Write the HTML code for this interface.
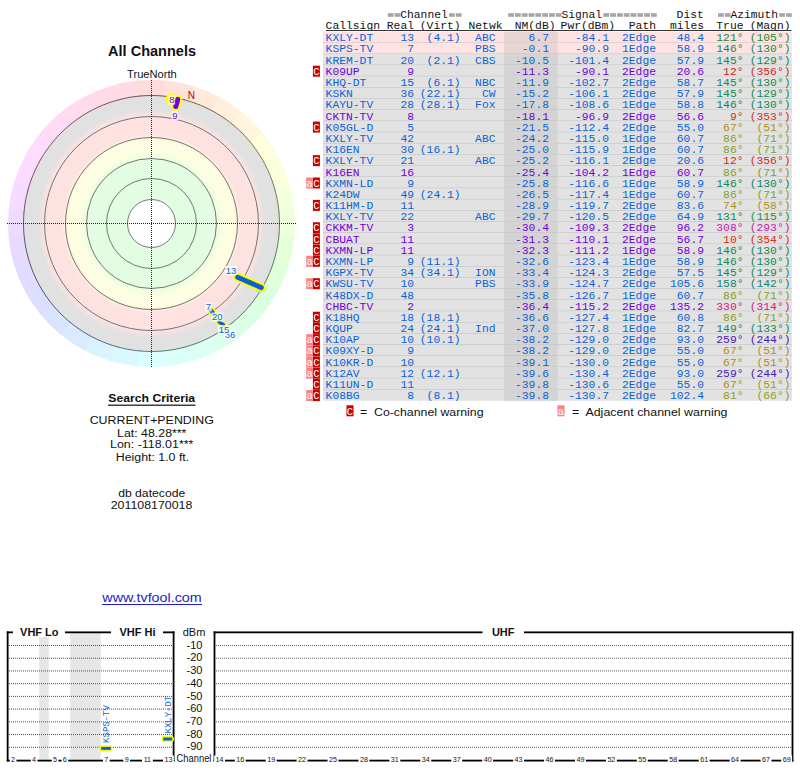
<!DOCTYPE html>
<html><head><meta charset="utf-8"><style>
html,body{margin:0;padding:0;background:#fff;width:800px;height:768px;overflow:hidden}
svg{display:block}
</style></head><body>
<svg width="800" height="768" viewBox="0 0 800 768">
<rect width="800" height="768" fill="#fff"/>
<path d="M136.69,80.77 A143.5,143.5 0 0 1 166.31,80.77 L164.61,97.18 A127,127 0 0 0 138.39,97.18 Z" fill="#ffdbdb"/>
<path d="M164.82,80.62 A143.5,143.5 0 0 1 193.87,86.40 L189.00,102.16 A127,127 0 0 0 163.29,97.05 Z" fill="#ffe2db"/>
<path d="M192.44,85.96 A143.5,143.5 0 0 1 219.81,97.30 L211.95,111.81 A127,127 0 0 0 187.73,101.78 Z" fill="#ffe9db"/>
<path d="M218.48,96.59 A143.5,143.5 0 0 1 243.11,113.05 L232.58,125.75 A127,127 0 0 0 210.78,111.18 Z" fill="#ffefdb"/>
<path d="M241.95,112.10 A143.5,143.5 0 0 1 262.90,133.05 L250.09,143.45 A127,127 0 0 0 231.55,124.91 Z" fill="#fff6db"/>
<path d="M261.95,131.89 A143.5,143.5 0 0 1 278.41,156.52 L263.82,164.22 A127,127 0 0 0 249.25,142.42 Z" fill="#fffddb"/>
<path d="M277.70,155.19 A143.5,143.5 0 0 1 289.04,182.56 L273.22,187.27 A127,127 0 0 0 263.19,163.05 Z" fill="#fbffdb"/>
<path d="M288.60,181.13 A143.5,143.5 0 0 1 294.38,210.18 L277.95,211.71 A127,127 0 0 0 272.84,186.00 Z" fill="#f4ffdb"/>
<path d="M294.23,208.69 A143.5,143.5 0 0 1 294.23,238.31 L277.82,236.61 A127,127 0 0 0 277.82,210.39 Z" fill="#edffdb"/>
<path d="M294.38,236.82 A143.5,143.5 0 0 1 288.60,265.87 L272.84,261.00 A127,127 0 0 0 277.95,235.29 Z" fill="#e6ffdb"/>
<path d="M289.04,264.44 A143.5,143.5 0 0 1 277.70,291.81 L263.19,283.95 A127,127 0 0 0 273.22,259.73 Z" fill="#e0ffdb"/>
<path d="M278.41,290.48 A143.5,143.5 0 0 1 261.95,315.11 L249.25,304.58 A127,127 0 0 0 263.82,282.78 Z" fill="#dbffde"/>
<path d="M262.90,313.95 A143.5,143.5 0 0 1 241.95,334.90 L231.55,322.09 A127,127 0 0 0 250.09,303.55 Z" fill="#dbffe4"/>
<path d="M243.11,333.95 A143.5,143.5 0 0 1 218.48,350.41 L210.78,335.82 A127,127 0 0 0 232.58,321.25 Z" fill="#dbffeb"/>
<path d="M219.81,349.70 A143.5,143.5 0 0 1 192.44,361.04 L187.73,345.22 A127,127 0 0 0 211.95,335.19 Z" fill="#dbfff2"/>
<path d="M193.87,360.60 A143.5,143.5 0 0 1 164.82,366.38 L163.29,349.95 A127,127 0 0 0 189.00,344.84 Z" fill="#dbfff8"/>
<path d="M166.31,366.23 A143.5,143.5 0 0 1 136.69,366.23 L138.39,349.82 A127,127 0 0 0 164.61,349.82 Z" fill="#dbffff"/>
<path d="M138.18,366.38 A143.5,143.5 0 0 1 109.13,360.60 L114.00,344.84 A127,127 0 0 0 139.71,349.95 Z" fill="#dbf8ff"/>
<path d="M110.56,361.04 A143.5,143.5 0 0 1 83.19,349.70 L91.05,335.19 A127,127 0 0 0 115.27,345.22 Z" fill="#dbf2ff"/>
<path d="M84.52,350.41 A143.5,143.5 0 0 1 59.89,333.95 L70.42,321.25 A127,127 0 0 0 92.22,335.82 Z" fill="#dbebff"/>
<path d="M61.05,334.90 A143.5,143.5 0 0 1 40.10,313.95 L52.91,303.55 A127,127 0 0 0 71.45,322.09 Z" fill="#dbe4ff"/>
<path d="M41.05,315.11 A143.5,143.5 0 0 1 24.59,290.48 L39.18,282.78 A127,127 0 0 0 53.75,304.58 Z" fill="#dbdeff"/>
<path d="M25.30,291.81 A143.5,143.5 0 0 1 13.96,264.44 L29.78,259.73 A127,127 0 0 0 39.81,283.95 Z" fill="#e0dbff"/>
<path d="M14.40,265.87 A143.5,143.5 0 0 1 8.62,236.82 L25.05,235.29 A127,127 0 0 0 30.16,261.00 Z" fill="#e6dbff"/>
<path d="M8.77,238.31 A143.5,143.5 0 0 1 8.77,208.69 L25.18,210.39 A127,127 0 0 0 25.18,236.61 Z" fill="#eddbff"/>
<path d="M8.62,210.18 A143.5,143.5 0 0 1 14.40,181.13 L30.16,186.00 A127,127 0 0 0 25.05,211.71 Z" fill="#f4dbff"/>
<path d="M13.96,182.56 A143.5,143.5 0 0 1 25.30,155.19 L39.81,163.05 A127,127 0 0 0 29.78,187.27 Z" fill="#fbdbff"/>
<path d="M24.59,156.52 A143.5,143.5 0 0 1 41.05,131.89 L53.75,142.42 A127,127 0 0 0 39.18,164.22 Z" fill="#ffdbfd"/>
<path d="M40.10,133.05 A143.5,143.5 0 0 1 61.05,112.10 L71.45,124.91 A127,127 0 0 0 52.91,143.45 Z" fill="#ffdbf6"/>
<path d="M59.89,113.05 A143.5,143.5 0 0 1 84.52,96.59 L92.22,111.18 A127,127 0 0 0 70.42,125.75 Z" fill="#ffdbef"/>
<path d="M83.19,97.30 A143.5,143.5 0 0 1 110.56,85.96 L115.27,101.78 A127,127 0 0 0 91.05,111.81 Z" fill="#ffdbe9"/>
<path d="M109.13,86.40 A143.5,143.5 0 0 1 138.18,80.62 L139.71,97.05 A127,127 0 0 0 114.00,102.16 Z" fill="#ffdbe2"/>
<defs><radialGradient id="bands" cx="151.5" cy="223.5" r="128" gradientUnits="userSpaceOnUse">
<stop offset="0.0000" stop-color="#ffffff"/>
<stop offset="0.1875" stop-color="#ffffff"/>
<stop offset="0.1876" stop-color="#e2fde2"/>
<stop offset="0.4961" stop-color="#e2fde2"/>
<stop offset="0.5586" stop-color="#fdfde2"/>
<stop offset="0.6523" stop-color="#fdfde2"/>
<stop offset="0.6992" stop-color="#fee2e2"/>
<stop offset="0.8359" stop-color="#fee2e2"/>
<stop offset="0.8906" stop-color="#e1e1e1"/>
<stop offset="1.0000" stop-color="#e1e1e1"/>
</radialGradient></defs>
<circle cx="151.5" cy="223.5" r="128" fill="url(#bands)"/>
<circle cx="151.5" cy="223.5" r="24" fill="none" stroke="#555" stroke-width="0.8"/>
<circle cx="151.5" cy="223.5" r="45" fill="none" stroke="#555" stroke-width="0.8"/>
<circle cx="151.5" cy="223.5" r="65" fill="none" stroke="#555" stroke-width="0.8"/>
<circle cx="151.5" cy="223.5" r="86" fill="none" stroke="#555" stroke-width="0.8"/>
<circle cx="151.5" cy="223.5" r="107" fill="none" stroke="#555" stroke-width="0.8"/>
<path d="M151.50,95.50 A128,128 0 0 1 163.10,96.03" fill="none" stroke="#73413f" stroke-width="0.9"/>
<path d="M162.66,95.99 A128,128 0 0 1 174.17,97.52" fill="none" stroke="#73463f" stroke-width="0.9"/>
<path d="M173.73,97.44 A128,128 0 0 1 185.06,99.98" fill="none" stroke="#734a3f" stroke-width="0.9"/>
<path d="M184.63,99.86 A128,128 0 0 1 195.70,103.37" fill="none" stroke="#734e3f" stroke-width="0.9"/>
<path d="M195.28,103.22 A128,128 0 0 1 206.00,107.68" fill="none" stroke="#73523f" stroke-width="0.9"/>
<path d="M205.60,107.49 A128,128 0 0 1 215.89,112.87" fill="none" stroke="#73573f" stroke-width="0.9"/>
<path d="M215.50,112.65 A128,128 0 0 1 225.28,118.91" fill="none" stroke="#735b3f" stroke-width="0.9"/>
<path d="M224.92,118.65 A128,128 0 0 1 234.12,125.73" fill="none" stroke="#735f3f" stroke-width="0.9"/>
<path d="M233.78,125.45 A128,128 0 0 1 242.33,133.31" fill="none" stroke="#73643f" stroke-width="0.9"/>
<path d="M242.01,132.99 A128,128 0 0 1 249.84,141.57" fill="none" stroke="#73683f" stroke-width="0.9"/>
<path d="M249.55,141.22 A128,128 0 0 1 256.61,150.45" fill="none" stroke="#736c3f" stroke-width="0.9"/>
<path d="M256.35,150.08 A128,128 0 0 1 262.57,159.89" fill="none" stroke="#73713f" stroke-width="0.9"/>
<path d="M262.35,159.50 A128,128 0 0 1 267.70,169.81" fill="none" stroke="#71733f" stroke-width="0.9"/>
<path d="M267.51,169.40 A128,128 0 0 1 271.93,180.14" fill="none" stroke="#6c733f" stroke-width="0.9"/>
<path d="M271.78,179.72 A128,128 0 0 1 275.25,190.80" fill="none" stroke="#68733f" stroke-width="0.9"/>
<path d="M275.14,190.37 A128,128 0 0 1 277.63,201.71" fill="none" stroke="#64733f" stroke-width="0.9"/>
<path d="M277.56,201.27 A128,128 0 0 1 279.05,212.79" fill="none" stroke="#5f733f" stroke-width="0.9"/>
<path d="M279.01,212.34 A128,128 0 0 1 279.50,223.95" fill="none" stroke="#5b733f" stroke-width="0.9"/>
<path d="M279.50,223.50 A128,128 0 0 1 278.97,235.10" fill="none" stroke="#57733f" stroke-width="0.9"/>
<path d="M279.01,234.66 A128,128 0 0 1 277.48,246.17" fill="none" stroke="#52733f" stroke-width="0.9"/>
<path d="M277.56,245.73 A128,128 0 0 1 275.02,257.06" fill="none" stroke="#4e733f" stroke-width="0.9"/>
<path d="M275.14,256.63 A128,128 0 0 1 271.63,267.70" fill="none" stroke="#4a733f" stroke-width="0.9"/>
<path d="M271.78,267.28 A128,128 0 0 1 267.32,278.00" fill="none" stroke="#46733f" stroke-width="0.9"/>
<path d="M267.51,277.60 A128,128 0 0 1 262.13,287.89" fill="none" stroke="#41733f" stroke-width="0.9"/>
<path d="M262.35,287.50 A128,128 0 0 1 256.09,297.28" fill="none" stroke="#3f7341" stroke-width="0.9"/>
<path d="M256.35,296.92 A128,128 0 0 1 249.27,306.12" fill="none" stroke="#3f7346" stroke-width="0.9"/>
<path d="M249.55,305.78 A128,128 0 0 1 241.69,314.33" fill="none" stroke="#3f734a" stroke-width="0.9"/>
<path d="M242.01,314.01 A128,128 0 0 1 233.43,321.84" fill="none" stroke="#3f734e" stroke-width="0.9"/>
<path d="M233.78,321.55 A128,128 0 0 1 224.55,328.61" fill="none" stroke="#3f7352" stroke-width="0.9"/>
<path d="M224.92,328.35 A128,128 0 0 1 215.11,334.57" fill="none" stroke="#3f7357" stroke-width="0.9"/>
<path d="M215.50,334.35 A128,128 0 0 1 205.19,339.70" fill="none" stroke="#3f735b" stroke-width="0.9"/>
<path d="M205.60,339.51 A128,128 0 0 1 194.86,343.93" fill="none" stroke="#3f735f" stroke-width="0.9"/>
<path d="M195.28,343.78 A128,128 0 0 1 184.20,347.25" fill="none" stroke="#3f7364" stroke-width="0.9"/>
<path d="M184.63,347.14 A128,128 0 0 1 173.29,349.63" fill="none" stroke="#3f7368" stroke-width="0.9"/>
<path d="M173.73,349.56 A128,128 0 0 1 162.21,351.05" fill="none" stroke="#3f736c" stroke-width="0.9"/>
<path d="M162.66,351.01 A128,128 0 0 1 151.05,351.50" fill="none" stroke="#3f7371" stroke-width="0.9"/>
<path d="M151.50,351.50 A128,128 0 0 1 139.90,350.97" fill="none" stroke="#3f7173" stroke-width="0.9"/>
<path d="M140.34,351.01 A128,128 0 0 1 128.83,349.48" fill="none" stroke="#3f6c73" stroke-width="0.9"/>
<path d="M129.27,349.56 A128,128 0 0 1 117.94,347.02" fill="none" stroke="#3f6873" stroke-width="0.9"/>
<path d="M118.37,347.14 A128,128 0 0 1 107.30,343.63" fill="none" stroke="#3f6473" stroke-width="0.9"/>
<path d="M107.72,343.78 A128,128 0 0 1 97.00,339.32" fill="none" stroke="#3f5f73" stroke-width="0.9"/>
<path d="M97.40,339.51 A128,128 0 0 1 87.11,334.13" fill="none" stroke="#3f5b73" stroke-width="0.9"/>
<path d="M87.50,334.35 A128,128 0 0 1 77.72,328.09" fill="none" stroke="#3f5773" stroke-width="0.9"/>
<path d="M78.08,328.35 A128,128 0 0 1 68.88,321.27" fill="none" stroke="#3f5273" stroke-width="0.9"/>
<path d="M69.22,321.55 A128,128 0 0 1 60.67,313.69" fill="none" stroke="#3f4e73" stroke-width="0.9"/>
<path d="M60.99,314.01 A128,128 0 0 1 53.16,305.43" fill="none" stroke="#3f4a73" stroke-width="0.9"/>
<path d="M53.45,305.78 A128,128 0 0 1 46.39,296.55" fill="none" stroke="#3f4673" stroke-width="0.9"/>
<path d="M46.65,296.92 A128,128 0 0 1 40.43,287.11" fill="none" stroke="#3f4173" stroke-width="0.9"/>
<path d="M40.65,287.50 A128,128 0 0 1 35.30,277.19" fill="none" stroke="#413f73" stroke-width="0.9"/>
<path d="M35.49,277.60 A128,128 0 0 1 31.07,266.86" fill="none" stroke="#463f73" stroke-width="0.9"/>
<path d="M31.22,267.28 A128,128 0 0 1 27.75,256.20" fill="none" stroke="#4a3f73" stroke-width="0.9"/>
<path d="M27.86,256.63 A128,128 0 0 1 25.37,245.29" fill="none" stroke="#4e3f73" stroke-width="0.9"/>
<path d="M25.44,245.73 A128,128 0 0 1 23.95,234.21" fill="none" stroke="#523f73" stroke-width="0.9"/>
<path d="M23.99,234.66 A128,128 0 0 1 23.50,223.05" fill="none" stroke="#573f73" stroke-width="0.9"/>
<path d="M23.50,223.50 A128,128 0 0 1 24.03,211.90" fill="none" stroke="#5b3f73" stroke-width="0.9"/>
<path d="M23.99,212.34 A128,128 0 0 1 25.52,200.83" fill="none" stroke="#5f3f73" stroke-width="0.9"/>
<path d="M25.44,201.27 A128,128 0 0 1 27.98,189.94" fill="none" stroke="#643f73" stroke-width="0.9"/>
<path d="M27.86,190.37 A128,128 0 0 1 31.37,179.30" fill="none" stroke="#683f73" stroke-width="0.9"/>
<path d="M31.22,179.72 A128,128 0 0 1 35.68,169.00" fill="none" stroke="#6c3f73" stroke-width="0.9"/>
<path d="M35.49,169.40 A128,128 0 0 1 40.87,159.11" fill="none" stroke="#713f73" stroke-width="0.9"/>
<path d="M40.65,159.50 A128,128 0 0 1 46.91,149.72" fill="none" stroke="#733f71" stroke-width="0.9"/>
<path d="M46.65,150.08 A128,128 0 0 1 53.73,140.88" fill="none" stroke="#733f6c" stroke-width="0.9"/>
<path d="M53.45,141.22 A128,128 0 0 1 61.31,132.67" fill="none" stroke="#733f68" stroke-width="0.9"/>
<path d="M60.99,132.99 A128,128 0 0 1 69.57,125.16" fill="none" stroke="#733f64" stroke-width="0.9"/>
<path d="M69.22,125.45 A128,128 0 0 1 78.45,118.39" fill="none" stroke="#733f5f" stroke-width="0.9"/>
<path d="M78.08,118.65 A128,128 0 0 1 87.89,112.43" fill="none" stroke="#733f5b" stroke-width="0.9"/>
<path d="M87.50,112.65 A128,128 0 0 1 97.81,107.30" fill="none" stroke="#733f57" stroke-width="0.9"/>
<path d="M97.40,107.49 A128,128 0 0 1 108.14,103.07" fill="none" stroke="#733f52" stroke-width="0.9"/>
<path d="M107.72,103.22 A128,128 0 0 1 118.80,99.75" fill="none" stroke="#733f4e" stroke-width="0.9"/>
<path d="M118.37,99.86 A128,128 0 0 1 129.71,97.37" fill="none" stroke="#733f4a" stroke-width="0.9"/>
<path d="M129.27,97.44 A128,128 0 0 1 140.79,95.95" fill="none" stroke="#733f46" stroke-width="0.9"/>
<path d="M140.34,95.99 A128,128 0 0 1 151.95,95.50" fill="none" stroke="#733f41" stroke-width="0.9"/>
<line x1="7" y1="223.5" x2="296" y2="223.5" stroke="#222" stroke-width="1" stroke-dasharray="1,1"/>
<line x1="151.5" y1="80" x2="151.5" y2="368" stroke="#222" stroke-width="1" stroke-dasharray="1,1"/>
<text transform="translate(152.05,55.60) scale(1.0369,1)" x="0" y="0" font-family="Liberation Sans, sans-serif" font-size="14" font-weight="bold" text-anchor="middle" fill="#111" xml:space="preserve">All Channels</text>
<text transform="translate(151.90,77.60) scale(1.0609,1)" x="0" y="0" font-family="Liberation Sans, sans-serif" font-size="10.5" text-anchor="middle" fill="#111" xml:space="preserve">TrueNorth</text>
<text x="191.3" y="99" font-family="Liberation Sans, sans-serif" font-size="10" text-anchor="middle" fill="#c00000">N</text>
<line x1="237.7" y1="277.2" x2="261.3" y2="287.6" stroke="#ffff00" stroke-width="9" stroke-linecap="round"/>
<line x1="237.7" y1="277.2" x2="261.3" y2="287.6" stroke="#0a62d8" stroke-width="5" stroke-linecap="round"/>
<line x1="210.5" y1="310" x2="225.5" y2="329" stroke="#ffff00" stroke-width="7.5" stroke-linecap="round"/>
<line x1="210.8" y1="310.2" x2="212.8" y2="312.6" stroke="#0a62d8" stroke-width="4" stroke-linecap="round"/>
<line x1="219" y1="321.8" x2="223.5" y2="325" stroke="#0a62d8" stroke-width="3.5" stroke-linecap="round"/>
<circle cx="171.3" cy="99.3" r="5.8" fill="#ffff00"/>
<line x1="177.8" y1="99.3" x2="175.8" y2="106.5" stroke="#ffff00" stroke-width="9" stroke-linecap="round"/>
<line x1="177.8" y1="99.3" x2="175.8" y2="106.5" stroke="#7000dc" stroke-width="5" stroke-linecap="round"/>
<rect x="168.5" y="95.5" width="6.6" height="9" fill="#fff" fill-opacity="0.75"/>
<text x="171.8" y="103" font-family="Liberation Sans, sans-serif" font-size="9.5" text-anchor="middle" fill="#7000dc">8</text>
<rect x="171.5" y="111.0" width="6.6" height="9" fill="#fff" fill-opacity="0.75"/>
<text x="174.8" y="118.5" font-family="Liberation Sans, sans-serif" font-size="9.5" text-anchor="middle" fill="#7000dc">9</text>
<rect x="224.9" y="266.0" width="12.2" height="9" fill="#fff" fill-opacity="0.75"/>
<text x="231" y="273.5" font-family="Liberation Sans, sans-serif" font-size="9.5" text-anchor="middle" fill="#0a62d8">13</text>
<rect x="205.2" y="302.5" width="6.6" height="9" fill="#fff" fill-opacity="0.75"/>
<text x="208.5" y="310" font-family="Liberation Sans, sans-serif" font-size="9.5" text-anchor="middle" fill="#0a62d8">7</text>
<rect x="211.20000000000002" y="312.5" width="12.2" height="9" fill="#fff" fill-opacity="0.75"/>
<text x="217.3" y="320" font-family="Liberation Sans, sans-serif" font-size="9.5" text-anchor="middle" fill="#0a62d8">20</text>
<rect x="223.9" y="330.0" width="12.2" height="9" fill="#fff" fill-opacity="0.75"/>
<text x="230.0" y="337.5" font-family="Liberation Sans, sans-serif" font-size="9.5" text-anchor="middle" fill="#0a62d8">36</text>
<rect x="217.9" y="325.0" width="12.2" height="9" fill="#fff" fill-opacity="0.75"/>
<text x="224.0" y="332.5" font-family="Liberation Sans, sans-serif" font-size="9.5" text-anchor="middle" fill="#0a62d8">15</text>
<text transform="translate(151.70,401.60) scale(1.0634,1)" x="0" y="0" font-family="Liberation Sans, sans-serif" font-size="11.5" font-weight="bold" text-anchor="middle" fill="#111" xml:space="preserve">Search Criteria</text>
<rect x="108" y="404.6" width="87.5" height="1.2" fill="#111"/>
<text transform="translate(151.70,423.50) scale(1.1266,1)" x="0" y="0" font-family="Liberation Sans, sans-serif" font-size="11" text-anchor="middle" fill="#111" xml:space="preserve">CURRENT+PENDING</text>
<text transform="translate(151.75,436.60) scale(1.1230,1)" x="0" y="0" font-family="Liberation Sans, sans-serif" font-size="11" text-anchor="middle" fill="#111" xml:space="preserve">Lat: 48.28***</text>
<text transform="translate(151.70,448.40) scale(1.1315,1)" x="0" y="0" font-family="Liberation Sans, sans-serif" font-size="11" text-anchor="middle" fill="#111" xml:space="preserve">Lon: -118.01***</text>
<text transform="translate(152.50,460.60) scale(1.1219,1)" x="0" y="0" font-family="Liberation Sans, sans-serif" font-size="11" text-anchor="middle" fill="#111" xml:space="preserve">Height: 1.0 ft.</text>
<text transform="translate(151.70,497.20) scale(1.1100,1)" x="0" y="0" font-family="Liberation Sans, sans-serif" font-size="11" text-anchor="middle" fill="#111" xml:space="preserve">db datecode</text>
<text transform="translate(151.50,509.40) scale(1.1250,1)" x="0" y="0" font-family="Liberation Sans, sans-serif" font-size="11" text-anchor="middle" fill="#111" xml:space="preserve">201108170018</text>
<text transform="translate(152.00,601.90) scale(1.1448,1)" x="0" y="0" font-family="Liberation Sans, sans-serif" font-size="12.5" text-anchor="middle" fill="#2222cc" xml:space="preserve">www.tvfool.com</text>
<rect x="102" y="604" width="100" height="1" fill="#2222cc"/>
<rect x="39.3" y="633" width="9.45" height="126.5" fill="#e6e6e6"/>
<rect x="70.2" y="633" width="30.6" height="126.5" fill="#e6e6e6"/>
<line x1="9" y1="645.50" x2="173" y2="645.50" stroke="#505050" stroke-width="1" stroke-dasharray="1,1"/>
<line x1="216" y1="645.50" x2="792" y2="645.50" stroke="#606060" stroke-width="1" stroke-dasharray="1,1"/>
<text x="202.5" y="648.70" font-family="Liberation Sans, sans-serif" font-size="11" text-anchor="end" fill="#111">-10</text>
<line x1="9" y1="658.22" x2="173" y2="658.22" stroke="#505050" stroke-width="1" stroke-dasharray="1,1"/>
<line x1="216" y1="658.22" x2="792" y2="658.22" stroke="#606060" stroke-width="1" stroke-dasharray="1,1"/>
<text x="202.5" y="661.42" font-family="Liberation Sans, sans-serif" font-size="11" text-anchor="end" fill="#111">-20</text>
<line x1="9" y1="670.94" x2="173" y2="670.94" stroke="#505050" stroke-width="1" stroke-dasharray="1,1"/>
<line x1="216" y1="670.94" x2="792" y2="670.94" stroke="#606060" stroke-width="1" stroke-dasharray="1,1"/>
<text x="202.5" y="674.14" font-family="Liberation Sans, sans-serif" font-size="11" text-anchor="end" fill="#111">-30</text>
<line x1="9" y1="683.66" x2="173" y2="683.66" stroke="#505050" stroke-width="1" stroke-dasharray="1,1"/>
<line x1="216" y1="683.66" x2="792" y2="683.66" stroke="#606060" stroke-width="1" stroke-dasharray="1,1"/>
<text x="202.5" y="686.86" font-family="Liberation Sans, sans-serif" font-size="11" text-anchor="end" fill="#111">-40</text>
<line x1="9" y1="696.38" x2="173" y2="696.38" stroke="#505050" stroke-width="1" stroke-dasharray="1,1"/>
<line x1="216" y1="696.38" x2="792" y2="696.38" stroke="#606060" stroke-width="1" stroke-dasharray="1,1"/>
<text x="202.5" y="699.58" font-family="Liberation Sans, sans-serif" font-size="11" text-anchor="end" fill="#111">-50</text>
<line x1="9" y1="709.10" x2="173" y2="709.10" stroke="#505050" stroke-width="1" stroke-dasharray="1,1"/>
<line x1="216" y1="709.10" x2="792" y2="709.10" stroke="#606060" stroke-width="1" stroke-dasharray="1,1"/>
<text x="202.5" y="712.30" font-family="Liberation Sans, sans-serif" font-size="11" text-anchor="end" fill="#111">-60</text>
<line x1="9" y1="721.82" x2="173" y2="721.82" stroke="#505050" stroke-width="1" stroke-dasharray="1,1"/>
<line x1="216" y1="721.82" x2="792" y2="721.82" stroke="#606060" stroke-width="1" stroke-dasharray="1,1"/>
<text x="202.5" y="725.02" font-family="Liberation Sans, sans-serif" font-size="11" text-anchor="end" fill="#111">-70</text>
<line x1="9" y1="734.54" x2="173" y2="734.54" stroke="#505050" stroke-width="1" stroke-dasharray="1,1"/>
<line x1="216" y1="734.54" x2="792" y2="734.54" stroke="#606060" stroke-width="1" stroke-dasharray="1,1"/>
<text x="202.5" y="737.74" font-family="Liberation Sans, sans-serif" font-size="11" text-anchor="end" fill="#111">-80</text>
<line x1="9" y1="747.26" x2="173" y2="747.26" stroke="#505050" stroke-width="1" stroke-dasharray="1,1"/>
<line x1="216" y1="747.26" x2="792" y2="747.26" stroke="#606060" stroke-width="1" stroke-dasharray="1,1"/>
<text x="202.5" y="750.46" font-family="Liberation Sans, sans-serif" font-size="11" text-anchor="end" fill="#111">-90</text>
<text x="194" y="635.5" font-family="Liberation Sans, sans-serif" font-size="11" text-anchor="middle" fill="#111">dBm</text>
<text transform="translate(194.00,762.00) scale(0.8919,1)" x="0" y="0" font-family="Liberation Sans, sans-serif" font-size="10.5" text-anchor="middle" fill="#111" xml:space="preserve">Channel</text>
<rect x="6.75" y="631.45" width="1.8" height="130" fill="#000"/>
<rect x="6.75" y="631.45" width="6.2" height="1.8" fill="#000"/>
<rect x="65" y="631.45" width="46" height="1.8" fill="#000"/>
<rect x="163" y="631.45" width="11.5" height="1.8" fill="#000"/>
<rect x="172.7" y="631.45" width="1.8" height="130" fill="#000"/>
<rect x="6.75" y="759.7" width="167.75" height="1.8" fill="#000"/>
<rect x="213.6" y="631.45" width="1.8" height="130" fill="#000"/>
<rect x="213.6" y="631.45" width="268.9" height="1.8" fill="#000"/>
<rect x="524" y="631.45" width="269.4" height="1.8" fill="#000"/>
<rect x="791.6" y="631.45" width="1.8" height="130" fill="#000"/>
<rect x="213.6" y="759.7" width="579.8" height="1.8" fill="#000"/>
<rect x="13" y="626" width="51.5" height="11" fill="#fff"/>
<rect x="112" y="626" width="50.5" height="11" fill="#fff"/>
<text x="39.3" y="636" font-family="Liberation Sans, sans-serif" font-size="11" font-weight="bold" text-anchor="middle" fill="#111">VHF Lo</text>
<text x="137.5" y="636" font-family="Liberation Sans, sans-serif" font-size="11" font-weight="bold" text-anchor="middle" fill="#111">VHF Hi</text>
<text x="503.2" y="636" font-family="Liberation Sans, sans-serif" font-size="11" font-weight="bold" text-anchor="middle" fill="#111">UHF</text>
<rect x="9.75" y="755.5" width="6.7" height="7" fill="#fff"/>
<text x="13.1" y="762" font-family="Liberation Sans, sans-serif" font-size="7.2" text-anchor="middle" fill="#111">2</text>
<rect x="30.75" y="755.5" width="6.7" height="7" fill="#fff"/>
<text x="34.1" y="762" font-family="Liberation Sans, sans-serif" font-size="7.2" text-anchor="middle" fill="#111">4</text>
<rect x="51.75" y="755.5" width="6.7" height="7" fill="#fff"/>
<text x="55.1" y="762" font-family="Liberation Sans, sans-serif" font-size="7.2" text-anchor="middle" fill="#111">5</text>
<rect x="61.49999999999999" y="755.5" width="6.7" height="7" fill="#fff"/>
<text x="64.85" y="762" font-family="Liberation Sans, sans-serif" font-size="7.2" text-anchor="middle" fill="#111">6</text>
<rect x="102.95" y="755.5" width="6.7" height="7" fill="#fff"/>
<text x="106.3" y="762" font-family="Liberation Sans, sans-serif" font-size="7.2" text-anchor="middle" fill="#111">7</text>
<rect x="123.35000000000001" y="755.5" width="6.7" height="7" fill="#fff"/>
<text x="126.7" y="762" font-family="Liberation Sans, sans-serif" font-size="7.2" text-anchor="middle" fill="#111">9</text>
<rect x="141.95000000000002" y="755.5" width="10.9" height="7" fill="#fff"/>
<text x="147.4" y="762" font-family="Liberation Sans, sans-serif" font-size="7.2" text-anchor="middle" fill="#111">11</text>
<rect x="162.95000000000002" y="755.5" width="10.9" height="7" fill="#fff"/>
<text x="168.4" y="762" font-family="Liberation Sans, sans-serif" font-size="7.2" text-anchor="middle" fill="#111">13</text>
<rect x="214.15" y="755.5" width="10.9" height="7" fill="#fff"/>
<text x="219.6" y="762" font-family="Liberation Sans, sans-serif" font-size="7.2" text-anchor="middle" fill="#111">14</text>
<rect x="234.77" y="755.5" width="10.9" height="7" fill="#fff"/>
<text x="240.22" y="762" font-family="Liberation Sans, sans-serif" font-size="7.2" text-anchor="middle" fill="#111">16</text>
<rect x="265.7" y="755.5" width="10.9" height="7" fill="#fff"/>
<text x="271.15" y="762" font-family="Liberation Sans, sans-serif" font-size="7.2" text-anchor="middle" fill="#111">19</text>
<rect x="296.63" y="755.5" width="10.9" height="7" fill="#fff"/>
<text x="302.08" y="762" font-family="Liberation Sans, sans-serif" font-size="7.2" text-anchor="middle" fill="#111">22</text>
<rect x="327.56" y="755.5" width="10.9" height="7" fill="#fff"/>
<text x="333.01" y="762" font-family="Liberation Sans, sans-serif" font-size="7.2" text-anchor="middle" fill="#111">25</text>
<rect x="358.49" y="755.5" width="10.9" height="7" fill="#fff"/>
<text x="363.94" y="762" font-family="Liberation Sans, sans-serif" font-size="7.2" text-anchor="middle" fill="#111">28</text>
<rect x="389.42" y="755.5" width="10.9" height="7" fill="#fff"/>
<text x="394.87" y="762" font-family="Liberation Sans, sans-serif" font-size="7.2" text-anchor="middle" fill="#111">31</text>
<rect x="420.35" y="755.5" width="10.9" height="7" fill="#fff"/>
<text x="425.8" y="762" font-family="Liberation Sans, sans-serif" font-size="7.2" text-anchor="middle" fill="#111">34</text>
<rect x="451.28000000000003" y="755.5" width="10.9" height="7" fill="#fff"/>
<text x="456.73" y="762" font-family="Liberation Sans, sans-serif" font-size="7.2" text-anchor="middle" fill="#111">37</text>
<rect x="482.21" y="755.5" width="10.9" height="7" fill="#fff"/>
<text x="487.65999999999997" y="762" font-family="Liberation Sans, sans-serif" font-size="7.2" text-anchor="middle" fill="#111">40</text>
<rect x="513.14" y="755.5" width="10.9" height="7" fill="#fff"/>
<text x="518.59" y="762" font-family="Liberation Sans, sans-serif" font-size="7.2" text-anchor="middle" fill="#111">43</text>
<rect x="544.0699999999999" y="755.5" width="10.9" height="7" fill="#fff"/>
<text x="549.52" y="762" font-family="Liberation Sans, sans-serif" font-size="7.2" text-anchor="middle" fill="#111">46</text>
<rect x="575.0" y="755.5" width="10.9" height="7" fill="#fff"/>
<text x="580.45" y="762" font-family="Liberation Sans, sans-serif" font-size="7.2" text-anchor="middle" fill="#111">49</text>
<rect x="605.93" y="755.5" width="10.9" height="7" fill="#fff"/>
<text x="611.38" y="762" font-family="Liberation Sans, sans-serif" font-size="7.2" text-anchor="middle" fill="#111">52</text>
<rect x="636.86" y="755.5" width="10.9" height="7" fill="#fff"/>
<text x="642.3100000000001" y="762" font-family="Liberation Sans, sans-serif" font-size="7.2" text-anchor="middle" fill="#111">55</text>
<rect x="667.79" y="755.5" width="10.9" height="7" fill="#fff"/>
<text x="673.24" y="762" font-family="Liberation Sans, sans-serif" font-size="7.2" text-anchor="middle" fill="#111">58</text>
<rect x="698.72" y="755.5" width="10.9" height="7" fill="#fff"/>
<text x="704.1700000000001" y="762" font-family="Liberation Sans, sans-serif" font-size="7.2" text-anchor="middle" fill="#111">61</text>
<rect x="729.65" y="755.5" width="10.9" height="7" fill="#fff"/>
<text x="735.1" y="762" font-family="Liberation Sans, sans-serif" font-size="7.2" text-anchor="middle" fill="#111">64</text>
<rect x="760.58" y="755.5" width="10.9" height="7" fill="#fff"/>
<text x="766.0300000000001" y="762" font-family="Liberation Sans, sans-serif" font-size="7.2" text-anchor="middle" fill="#111">67</text>
<rect x="781.2" y="755.5" width="10.9" height="7" fill="#fff"/>
<text x="786.6500000000001" y="762" font-family="Liberation Sans, sans-serif" font-size="7.2" text-anchor="middle" fill="#111">69</text>
<line x1="102.7" y1="748.4" x2="109.4" y2="748.4" stroke="#ffff00" stroke-width="6.5" stroke-linecap="round"/>
<line x1="101.2" y1="748.4" x2="110.9" y2="748.4" stroke="#0a62d8" stroke-width="3"/>
<text transform="translate(109.35000000000001,742.9) rotate(-90)" font-family="Liberation Mono, monospace" font-size="9" fill="#0a62d8">KSPS-TV</text>
<line x1="164.7" y1="739" x2="170.7" y2="739" stroke="#ffff00" stroke-width="6.5" stroke-linecap="round"/>
<line x1="163.2" y1="739" x2="172.2" y2="739" stroke="#0a62d8" stroke-width="3"/>
<text transform="translate(171.0,733.5) rotate(-90)" font-family="Liberation Mono, monospace" font-size="9" fill="#0a62d8">KXLY-DT</text>
<rect x="323.0" y="31.60" width="468.79999999999995" height="11.20" fill="#fde3e3"/>
<rect x="504.0" y="31.60" width="53.700000000000045" height="11.20" fill="#e8d4d4"/>
<rect x="323.0" y="42.30" width="468.79999999999995" height="1" fill="#d9bcbc"/>
<rect x="323.0" y="42.80" width="468.79999999999995" height="11.19" fill="#fde3e3"/>
<rect x="504.0" y="42.80" width="53.700000000000045" height="11.19" fill="#e8d4d4"/>
<rect x="323.0" y="53.48" width="468.79999999999995" height="1" fill="#d9bcbc"/>
<rect x="323.0" y="53.98" width="468.79999999999995" height="11.19" fill="#e2e2e2"/>
<rect x="504.0" y="53.98" width="53.700000000000045" height="11.19" fill="#d4d4d4"/>
<rect x="323.0" y="64.67" width="468.79999999999995" height="1" fill="#bdbdbd"/>
<rect x="323.0" y="65.17" width="468.79999999999995" height="11.18" fill="#e2e2e2"/>
<rect x="504.0" y="65.17" width="53.700000000000045" height="11.18" fill="#d4d4d4"/>
<rect x="323.0" y="75.85" width="468.79999999999995" height="1" fill="#bdbdbd"/>
<rect x="323.0" y="76.35" width="468.79999999999995" height="11.19" fill="#e2e2e2"/>
<rect x="504.0" y="76.35" width="53.700000000000045" height="11.19" fill="#d4d4d4"/>
<rect x="323.0" y="87.04" width="468.79999999999995" height="1" fill="#bdbdbd"/>
<rect x="323.0" y="87.54" width="468.79999999999995" height="11.19" fill="#e2e2e2"/>
<rect x="504.0" y="87.54" width="53.700000000000045" height="11.19" fill="#d4d4d4"/>
<rect x="323.0" y="98.22" width="468.79999999999995" height="1" fill="#bdbdbd"/>
<rect x="323.0" y="98.72" width="468.79999999999995" height="11.19" fill="#e2e2e2"/>
<rect x="504.0" y="98.72" width="53.700000000000045" height="11.19" fill="#d4d4d4"/>
<rect x="323.0" y="109.41" width="468.79999999999995" height="1" fill="#bdbdbd"/>
<rect x="323.0" y="109.91" width="468.79999999999995" height="11.19" fill="#e2e2e2"/>
<rect x="504.0" y="109.91" width="53.700000000000045" height="11.19" fill="#d4d4d4"/>
<rect x="323.0" y="120.59" width="468.79999999999995" height="1" fill="#bdbdbd"/>
<rect x="323.0" y="121.09" width="468.79999999999995" height="11.19" fill="#e2e2e2"/>
<rect x="504.0" y="121.09" width="53.700000000000045" height="11.19" fill="#d4d4d4"/>
<rect x="323.0" y="131.78" width="468.79999999999995" height="1" fill="#bdbdbd"/>
<rect x="323.0" y="132.28" width="468.79999999999995" height="11.19" fill="#e2e2e2"/>
<rect x="504.0" y="132.28" width="53.700000000000045" height="11.19" fill="#d4d4d4"/>
<rect x="323.0" y="142.97" width="468.79999999999995" height="1" fill="#bdbdbd"/>
<rect x="323.0" y="143.47" width="468.79999999999995" height="11.19" fill="#e2e2e2"/>
<rect x="504.0" y="143.47" width="53.700000000000045" height="11.19" fill="#d4d4d4"/>
<rect x="323.0" y="154.15" width="468.79999999999995" height="1" fill="#bdbdbd"/>
<rect x="323.0" y="154.65" width="468.79999999999995" height="11.19" fill="#e2e2e2"/>
<rect x="504.0" y="154.65" width="53.700000000000045" height="11.19" fill="#d4d4d4"/>
<rect x="323.0" y="165.34" width="468.79999999999995" height="1" fill="#bdbdbd"/>
<rect x="323.0" y="165.84" width="468.79999999999995" height="11.18" fill="#e2e2e2"/>
<rect x="504.0" y="165.84" width="53.700000000000045" height="11.18" fill="#d4d4d4"/>
<rect x="323.0" y="176.52" width="468.79999999999995" height="1" fill="#bdbdbd"/>
<rect x="323.0" y="177.02" width="468.79999999999995" height="11.19" fill="#e2e2e2"/>
<rect x="504.0" y="177.02" width="53.700000000000045" height="11.19" fill="#d4d4d4"/>
<rect x="323.0" y="187.70" width="468.79999999999995" height="1" fill="#bdbdbd"/>
<rect x="323.0" y="188.20" width="468.79999999999995" height="11.19" fill="#e2e2e2"/>
<rect x="504.0" y="188.20" width="53.700000000000045" height="11.19" fill="#d4d4d4"/>
<rect x="323.0" y="198.89" width="468.79999999999995" height="1" fill="#bdbdbd"/>
<rect x="323.0" y="199.39" width="468.79999999999995" height="11.19" fill="#e2e2e2"/>
<rect x="504.0" y="199.39" width="53.700000000000045" height="11.19" fill="#d4d4d4"/>
<rect x="323.0" y="210.07" width="468.79999999999995" height="1" fill="#bdbdbd"/>
<rect x="323.0" y="210.57" width="468.79999999999995" height="11.19" fill="#e2e2e2"/>
<rect x="504.0" y="210.57" width="53.700000000000045" height="11.19" fill="#d4d4d4"/>
<rect x="323.0" y="221.26" width="468.79999999999995" height="1" fill="#bdbdbd"/>
<rect x="323.0" y="221.76" width="468.79999999999995" height="11.19" fill="#e2e2e2"/>
<rect x="504.0" y="221.76" width="53.700000000000045" height="11.19" fill="#d4d4d4"/>
<rect x="323.0" y="232.44" width="468.79999999999995" height="1" fill="#bdbdbd"/>
<rect x="323.0" y="232.94" width="468.79999999999995" height="11.19" fill="#e2e2e2"/>
<rect x="504.0" y="232.94" width="53.700000000000045" height="11.19" fill="#d4d4d4"/>
<rect x="323.0" y="243.63" width="468.79999999999995" height="1" fill="#bdbdbd"/>
<rect x="323.0" y="244.13" width="468.79999999999995" height="11.19" fill="#e2e2e2"/>
<rect x="504.0" y="244.13" width="53.700000000000045" height="11.19" fill="#d4d4d4"/>
<rect x="323.0" y="254.81" width="468.79999999999995" height="1" fill="#bdbdbd"/>
<rect x="323.0" y="255.31" width="468.79999999999995" height="11.19" fill="#e2e2e2"/>
<rect x="504.0" y="255.31" width="53.700000000000045" height="11.19" fill="#d4d4d4"/>
<rect x="323.0" y="266.00" width="468.79999999999995" height="1" fill="#bdbdbd"/>
<rect x="323.0" y="266.50" width="468.79999999999995" height="11.19" fill="#e2e2e2"/>
<rect x="504.0" y="266.50" width="53.700000000000045" height="11.19" fill="#d4d4d4"/>
<rect x="323.0" y="277.19" width="468.79999999999995" height="1" fill="#bdbdbd"/>
<rect x="323.0" y="277.69" width="468.79999999999995" height="11.19" fill="#e2e2e2"/>
<rect x="504.0" y="277.69" width="53.700000000000045" height="11.19" fill="#d4d4d4"/>
<rect x="323.0" y="288.37" width="468.79999999999995" height="1" fill="#bdbdbd"/>
<rect x="323.0" y="288.87" width="468.79999999999995" height="11.19" fill="#e2e2e2"/>
<rect x="504.0" y="288.87" width="53.700000000000045" height="11.19" fill="#d4d4d4"/>
<rect x="323.0" y="299.56" width="468.79999999999995" height="1" fill="#bdbdbd"/>
<rect x="323.0" y="300.06" width="468.79999999999995" height="11.19" fill="#e2e2e2"/>
<rect x="504.0" y="300.06" width="53.700000000000045" height="11.19" fill="#d4d4d4"/>
<rect x="323.0" y="310.74" width="468.79999999999995" height="1" fill="#bdbdbd"/>
<rect x="323.0" y="311.24" width="468.79999999999995" height="11.19" fill="#e2e2e2"/>
<rect x="504.0" y="311.24" width="53.700000000000045" height="11.19" fill="#d4d4d4"/>
<rect x="323.0" y="321.93" width="468.79999999999995" height="1" fill="#bdbdbd"/>
<rect x="323.0" y="322.43" width="468.79999999999995" height="11.19" fill="#e2e2e2"/>
<rect x="504.0" y="322.43" width="53.700000000000045" height="11.19" fill="#d4d4d4"/>
<rect x="323.0" y="333.11" width="468.79999999999995" height="1" fill="#bdbdbd"/>
<rect x="323.0" y="333.61" width="468.79999999999995" height="11.19" fill="#e2e2e2"/>
<rect x="504.0" y="333.61" width="53.700000000000045" height="11.19" fill="#d4d4d4"/>
<rect x="323.0" y="344.30" width="468.79999999999995" height="1" fill="#bdbdbd"/>
<rect x="323.0" y="344.80" width="468.79999999999995" height="11.19" fill="#e2e2e2"/>
<rect x="504.0" y="344.80" width="53.700000000000045" height="11.19" fill="#d4d4d4"/>
<rect x="323.0" y="355.48" width="468.79999999999995" height="1" fill="#bdbdbd"/>
<rect x="323.0" y="355.98" width="468.79999999999995" height="11.19" fill="#e2e2e2"/>
<rect x="504.0" y="355.98" width="53.700000000000045" height="11.19" fill="#d4d4d4"/>
<rect x="323.0" y="366.67" width="468.79999999999995" height="1" fill="#bdbdbd"/>
<rect x="323.0" y="367.17" width="468.79999999999995" height="11.19" fill="#e2e2e2"/>
<rect x="504.0" y="367.17" width="53.700000000000045" height="11.19" fill="#d4d4d4"/>
<rect x="323.0" y="377.85" width="468.79999999999995" height="1" fill="#bdbdbd"/>
<rect x="323.0" y="378.35" width="468.79999999999995" height="11.19" fill="#e2e2e2"/>
<rect x="504.0" y="378.35" width="53.700000000000045" height="11.19" fill="#d4d4d4"/>
<rect x="323.0" y="389.04" width="468.79999999999995" height="1" fill="#bdbdbd"/>
<rect x="323.0" y="389.54" width="468.79999999999995" height="11.19" fill="#e2e2e2"/>
<rect x="504.0" y="389.54" width="53.700000000000045" height="11.19" fill="#d4d4d4"/>
<rect x="387.80" y="13.2" width="5.8" height="3.6" fill="#a6a6a6"/>
<rect x="394.60" y="13.2" width="5.8" height="3.6" fill="#a6a6a6"/>
<text x="400.20" y="17.50" font-family="Liberation Mono, monospace" font-size="11.33" text-anchor="start" fill="#111" xml:space="preserve">Channel</text>
<rect x="448.98" y="13.2" width="5.8" height="3.6" fill="#a6a6a6"/>
<rect x="455.78" y="13.2" width="5.8" height="3.6" fill="#a6a6a6"/>
<rect x="508.20" y="13.2" width="5.8" height="3.6" fill="#a6a6a6"/>
<rect x="515.00" y="13.2" width="5.8" height="3.6" fill="#a6a6a6"/>
<rect x="521.80" y="13.2" width="5.8" height="3.6" fill="#a6a6a6"/>
<rect x="528.60" y="13.2" width="5.8" height="3.6" fill="#a6a6a6"/>
<rect x="535.40" y="13.2" width="5.8" height="3.6" fill="#a6a6a6"/>
<rect x="542.20" y="13.2" width="5.8" height="3.6" fill="#a6a6a6"/>
<rect x="549.00" y="13.2" width="5.8" height="3.6" fill="#a6a6a6"/>
<rect x="555.80" y="13.2" width="5.8" height="3.6" fill="#a6a6a6"/>
<text x="561.38" y="17.50" font-family="Liberation Mono, monospace" font-size="11.33" text-anchor="start" fill="#111" xml:space="preserve">Signal</text>
<rect x="603.37" y="13.2" width="5.8" height="3.6" fill="#a6a6a6"/>
<rect x="610.17" y="13.2" width="5.8" height="3.6" fill="#a6a6a6"/>
<rect x="616.97" y="13.2" width="5.8" height="3.6" fill="#a6a6a6"/>
<rect x="623.77" y="13.2" width="5.8" height="3.6" fill="#a6a6a6"/>
<rect x="630.57" y="13.2" width="5.8" height="3.6" fill="#a6a6a6"/>
<rect x="637.37" y="13.2" width="5.8" height="3.6" fill="#a6a6a6"/>
<rect x="644.17" y="13.2" width="5.8" height="3.6" fill="#a6a6a6"/>
<rect x="650.97" y="13.2" width="5.8" height="3.6" fill="#a6a6a6"/>
<text x="703.80" y="17.50" font-family="Liberation Mono, monospace" font-size="11.33" text-anchor="end" fill="#111" xml:space="preserve">Dist</text>
<rect x="718.00" y="13.2" width="5.8" height="3.6" fill="#a6a6a6"/>
<rect x="724.80" y="13.2" width="5.8" height="3.6" fill="#a6a6a6"/>
<text x="730.40" y="17.50" font-family="Liberation Mono, monospace" font-size="11.33" text-anchor="start" fill="#111" xml:space="preserve">Azimuth</text>
<rect x="779.18" y="13.2" width="5.8" height="3.6" fill="#a6a6a6"/>
<rect x="785.98" y="13.2" width="5.8" height="3.6" fill="#a6a6a6"/>
<text x="325.60" y="28.50" font-family="Liberation Mono, monospace" font-size="11.33" text-anchor="start" fill="#111" xml:space="preserve">Callsign</text>
<text x="414.00" y="28.50" font-family="Liberation Mono, monospace" font-size="11.33" text-anchor="end" fill="#111" xml:space="preserve">Real</text>
<text x="460.60" y="28.50" font-family="Liberation Mono, monospace" font-size="11.33" text-anchor="end" fill="#111" xml:space="preserve">(Virt)</text>
<text x="502.50" y="28.50" font-family="Liberation Mono, monospace" font-size="11.33" text-anchor="end" fill="#111" xml:space="preserve">Netwk</text>
<text x="555.50" y="28.50" font-family="Liberation Mono, monospace" font-size="11.33" text-anchor="end" fill="#111" xml:space="preserve">NM(dB)</text>
<text x="615.00" y="28.50" font-family="Liberation Mono, monospace" font-size="11.33" text-anchor="end" fill="#111" xml:space="preserve">Pwr(dBm)</text>
<text x="656.00" y="28.50" font-family="Liberation Mono, monospace" font-size="11.33" text-anchor="end" fill="#111" xml:space="preserve">Path</text>
<text x="704.00" y="28.50" font-family="Liberation Mono, monospace" font-size="11.33" text-anchor="end" fill="#111" xml:space="preserve">miles</text>
<text x="743.50" y="28.50" font-family="Liberation Mono, monospace" font-size="11.33" text-anchor="end" fill="#111" xml:space="preserve">True</text>
<text x="790.50" y="28.50" font-family="Liberation Mono, monospace" font-size="11.33" text-anchor="end" fill="#111" xml:space="preserve">(Magn)</text>
<rect x="326" y="30" width="465.5" height="1" fill="#333"/>
<text x="325.60" y="41.30" font-family="Liberation Mono, monospace" font-size="11.33" text-anchor="start" fill="#0a62d8" xml:space="preserve">KXLY-DT</text>
<text x="414.00" y="41.30" font-family="Liberation Mono, monospace" font-size="11.33" text-anchor="end" fill="#0a62d8" xml:space="preserve">13</text>
<text x="460.60" y="41.30" font-family="Liberation Mono, monospace" font-size="11.33" text-anchor="end" fill="#0a62d8" xml:space="preserve">(4.1)</text>
<text x="495.50" y="41.30" font-family="Liberation Mono, monospace" font-size="11.33" text-anchor="end" fill="#0a62d8" xml:space="preserve">ABC</text>
<text x="549.00" y="41.30" font-family="Liberation Mono, monospace" font-size="11.33" text-anchor="end" fill="#0a62d8" xml:space="preserve">6.7</text>
<text x="609.00" y="41.30" font-family="Liberation Mono, monospace" font-size="11.33" text-anchor="end" fill="#0a62d8" xml:space="preserve">-84.1</text>
<text x="656.00" y="41.30" font-family="Liberation Mono, monospace" font-size="11.33" text-anchor="end" fill="#0a62d8" xml:space="preserve">2Edge</text>
<text x="704.00" y="41.30" font-family="Liberation Mono, monospace" font-size="11.33" text-anchor="end" fill="#0a62d8" xml:space="preserve">48.4</text>
<text x="743.50" y="41.30" font-family="Liberation Mono, monospace" font-size="11.33" text-anchor="end" fill="#208a24" xml:space="preserve">121°</text>
<text x="790.50" y="41.30" font-family="Liberation Mono, monospace" font-size="11.33" text-anchor="end" fill="#208a24" xml:space="preserve">(105°)</text>
<text x="325.60" y="52.48" font-family="Liberation Mono, monospace" font-size="11.33" text-anchor="start" fill="#0a62d8" xml:space="preserve">KSPS-TV</text>
<text x="414.00" y="52.48" font-family="Liberation Mono, monospace" font-size="11.33" text-anchor="end" fill="#0a62d8" xml:space="preserve">7</text>
<text x="495.50" y="52.48" font-family="Liberation Mono, monospace" font-size="11.33" text-anchor="end" fill="#0a62d8" xml:space="preserve">PBS</text>
<text x="549.00" y="52.48" font-family="Liberation Mono, monospace" font-size="11.33" text-anchor="end" fill="#0a62d8" xml:space="preserve">-0.1</text>
<text x="609.00" y="52.48" font-family="Liberation Mono, monospace" font-size="11.33" text-anchor="end" fill="#0a62d8" xml:space="preserve">-90.9</text>
<text x="656.00" y="52.48" font-family="Liberation Mono, monospace" font-size="11.33" text-anchor="end" fill="#0a62d8" xml:space="preserve">1Edge</text>
<text x="704.00" y="52.48" font-family="Liberation Mono, monospace" font-size="11.33" text-anchor="end" fill="#0a62d8" xml:space="preserve">58.9</text>
<text x="743.50" y="52.48" font-family="Liberation Mono, monospace" font-size="11.33" text-anchor="end" fill="#108850" xml:space="preserve">146°</text>
<text x="790.50" y="52.48" font-family="Liberation Mono, monospace" font-size="11.33" text-anchor="end" fill="#108850" xml:space="preserve">(130°)</text>
<text x="325.60" y="63.67" font-family="Liberation Mono, monospace" font-size="11.33" text-anchor="start" fill="#0a62d8" xml:space="preserve">KREM-DT</text>
<text x="414.00" y="63.67" font-family="Liberation Mono, monospace" font-size="11.33" text-anchor="end" fill="#0a62d8" xml:space="preserve">20</text>
<text x="460.60" y="63.67" font-family="Liberation Mono, monospace" font-size="11.33" text-anchor="end" fill="#0a62d8" xml:space="preserve">(2.1)</text>
<text x="495.50" y="63.67" font-family="Liberation Mono, monospace" font-size="11.33" text-anchor="end" fill="#0a62d8" xml:space="preserve">CBS</text>
<text x="549.00" y="63.67" font-family="Liberation Mono, monospace" font-size="11.33" text-anchor="end" fill="#0a62d8" xml:space="preserve">-10.5</text>
<text x="609.00" y="63.67" font-family="Liberation Mono, monospace" font-size="11.33" text-anchor="end" fill="#0a62d8" xml:space="preserve">-101.4</text>
<text x="656.00" y="63.67" font-family="Liberation Mono, monospace" font-size="11.33" text-anchor="end" fill="#0a62d8" xml:space="preserve">2Edge</text>
<text x="704.00" y="63.67" font-family="Liberation Mono, monospace" font-size="11.33" text-anchor="end" fill="#0a62d8" xml:space="preserve">57.9</text>
<text x="743.50" y="63.67" font-family="Liberation Mono, monospace" font-size="11.33" text-anchor="end" fill="#108a50" xml:space="preserve">145°</text>
<text x="790.50" y="63.67" font-family="Liberation Mono, monospace" font-size="11.33" text-anchor="end" fill="#108a50" xml:space="preserve">(129°)</text>
<text x="325.60" y="74.85" font-family="Liberation Mono, monospace" font-size="11.33" text-anchor="start" fill="#7000dc" xml:space="preserve">K09UP</text>
<text x="414.00" y="74.85" font-family="Liberation Mono, monospace" font-size="11.33" text-anchor="end" fill="#7000dc" xml:space="preserve">9</text>
<text x="549.00" y="74.85" font-family="Liberation Mono, monospace" font-size="11.33" text-anchor="end" fill="#7000dc" xml:space="preserve">-11.3</text>
<text x="609.00" y="74.85" font-family="Liberation Mono, monospace" font-size="11.33" text-anchor="end" fill="#7000dc" xml:space="preserve">-90.1</text>
<text x="656.00" y="74.85" font-family="Liberation Mono, monospace" font-size="11.33" text-anchor="end" fill="#7000dc" xml:space="preserve">2Edge</text>
<text x="704.00" y="74.85" font-family="Liberation Mono, monospace" font-size="11.33" text-anchor="end" fill="#7000dc" xml:space="preserve">20.6</text>
<text x="743.50" y="74.85" font-family="Liberation Mono, monospace" font-size="11.33" text-anchor="end" fill="#d02828" xml:space="preserve">12°</text>
<text x="790.50" y="74.85" font-family="Liberation Mono, monospace" font-size="11.33" text-anchor="end" fill="#d02828" xml:space="preserve">(356°)</text>
<rect x="312.9" y="65.67" width="7" height="11" fill="#c80000"/>
<text x="316.4" y="74.85" font-family="Liberation Mono, monospace" font-size="10.5" text-anchor="middle" fill="#fff">C</text>
<text x="325.60" y="86.04" font-family="Liberation Mono, monospace" font-size="11.33" text-anchor="start" fill="#0a62d8" xml:space="preserve">KHQ-DT</text>
<text x="414.00" y="86.04" font-family="Liberation Mono, monospace" font-size="11.33" text-anchor="end" fill="#0a62d8" xml:space="preserve">15</text>
<text x="460.60" y="86.04" font-family="Liberation Mono, monospace" font-size="11.33" text-anchor="end" fill="#0a62d8" xml:space="preserve">(6.1)</text>
<text x="495.50" y="86.04" font-family="Liberation Mono, monospace" font-size="11.33" text-anchor="end" fill="#0a62d8" xml:space="preserve">NBC</text>
<text x="549.00" y="86.04" font-family="Liberation Mono, monospace" font-size="11.33" text-anchor="end" fill="#0a62d8" xml:space="preserve">-11.9</text>
<text x="609.00" y="86.04" font-family="Liberation Mono, monospace" font-size="11.33" text-anchor="end" fill="#0a62d8" xml:space="preserve">-102.7</text>
<text x="656.00" y="86.04" font-family="Liberation Mono, monospace" font-size="11.33" text-anchor="end" fill="#0a62d8" xml:space="preserve">2Edge</text>
<text x="704.00" y="86.04" font-family="Liberation Mono, monospace" font-size="11.33" text-anchor="end" fill="#0a62d8" xml:space="preserve">58.7</text>
<text x="743.50" y="86.04" font-family="Liberation Mono, monospace" font-size="11.33" text-anchor="end" fill="#108a50" xml:space="preserve">145°</text>
<text x="790.50" y="86.04" font-family="Liberation Mono, monospace" font-size="11.33" text-anchor="end" fill="#108a50" xml:space="preserve">(130°)</text>
<text x="325.60" y="97.22" font-family="Liberation Mono, monospace" font-size="11.33" text-anchor="start" fill="#0a62d8" xml:space="preserve">KSKN</text>
<text x="414.00" y="97.22" font-family="Liberation Mono, monospace" font-size="11.33" text-anchor="end" fill="#0a62d8" xml:space="preserve">36</text>
<text x="460.60" y="97.22" font-family="Liberation Mono, monospace" font-size="11.33" text-anchor="end" fill="#0a62d8" xml:space="preserve">(22.1)</text>
<text x="495.50" y="97.22" font-family="Liberation Mono, monospace" font-size="11.33" text-anchor="end" fill="#0a62d8" xml:space="preserve">CW</text>
<text x="549.00" y="97.22" font-family="Liberation Mono, monospace" font-size="11.33" text-anchor="end" fill="#0a62d8" xml:space="preserve">-15.2</text>
<text x="609.00" y="97.22" font-family="Liberation Mono, monospace" font-size="11.33" text-anchor="end" fill="#0a62d8" xml:space="preserve">-106.1</text>
<text x="656.00" y="97.22" font-family="Liberation Mono, monospace" font-size="11.33" text-anchor="end" fill="#0a62d8" xml:space="preserve">2Edge</text>
<text x="704.00" y="97.22" font-family="Liberation Mono, monospace" font-size="11.33" text-anchor="end" fill="#0a62d8" xml:space="preserve">57.9</text>
<text x="743.50" y="97.22" font-family="Liberation Mono, monospace" font-size="11.33" text-anchor="end" fill="#108a50" xml:space="preserve">145°</text>
<text x="790.50" y="97.22" font-family="Liberation Mono, monospace" font-size="11.33" text-anchor="end" fill="#108a50" xml:space="preserve">(129°)</text>
<text x="325.60" y="108.41" font-family="Liberation Mono, monospace" font-size="11.33" text-anchor="start" fill="#0a62d8" xml:space="preserve">KAYU-TV</text>
<text x="414.00" y="108.41" font-family="Liberation Mono, monospace" font-size="11.33" text-anchor="end" fill="#0a62d8" xml:space="preserve">28</text>
<text x="460.60" y="108.41" font-family="Liberation Mono, monospace" font-size="11.33" text-anchor="end" fill="#0a62d8" xml:space="preserve">(28.1)</text>
<text x="495.50" y="108.41" font-family="Liberation Mono, monospace" font-size="11.33" text-anchor="end" fill="#0a62d8" xml:space="preserve">Fox</text>
<text x="549.00" y="108.41" font-family="Liberation Mono, monospace" font-size="11.33" text-anchor="end" fill="#0a62d8" xml:space="preserve">-17.8</text>
<text x="609.00" y="108.41" font-family="Liberation Mono, monospace" font-size="11.33" text-anchor="end" fill="#0a62d8" xml:space="preserve">-108.6</text>
<text x="656.00" y="108.41" font-family="Liberation Mono, monospace" font-size="11.33" text-anchor="end" fill="#0a62d8" xml:space="preserve">1Edge</text>
<text x="704.00" y="108.41" font-family="Liberation Mono, monospace" font-size="11.33" text-anchor="end" fill="#0a62d8" xml:space="preserve">58.8</text>
<text x="743.50" y="108.41" font-family="Liberation Mono, monospace" font-size="11.33" text-anchor="end" fill="#108850" xml:space="preserve">146°</text>
<text x="790.50" y="108.41" font-family="Liberation Mono, monospace" font-size="11.33" text-anchor="end" fill="#108850" xml:space="preserve">(130°)</text>
<text x="325.60" y="119.59" font-family="Liberation Mono, monospace" font-size="11.33" text-anchor="start" fill="#7000dc" xml:space="preserve">CKTN-TV</text>
<text x="414.00" y="119.59" font-family="Liberation Mono, monospace" font-size="11.33" text-anchor="end" fill="#7000dc" xml:space="preserve">8</text>
<text x="549.00" y="119.59" font-family="Liberation Mono, monospace" font-size="11.33" text-anchor="end" fill="#7000dc" xml:space="preserve">-18.1</text>
<text x="609.00" y="119.59" font-family="Liberation Mono, monospace" font-size="11.33" text-anchor="end" fill="#7000dc" xml:space="preserve">-96.9</text>
<text x="656.00" y="119.59" font-family="Liberation Mono, monospace" font-size="11.33" text-anchor="end" fill="#7000dc" xml:space="preserve">2Edge</text>
<text x="704.00" y="119.59" font-family="Liberation Mono, monospace" font-size="11.33" text-anchor="end" fill="#7000dc" xml:space="preserve">56.6</text>
<text x="743.50" y="119.59" font-family="Liberation Mono, monospace" font-size="11.33" text-anchor="end" fill="#d03020" xml:space="preserve">9°</text>
<text x="790.50" y="119.59" font-family="Liberation Mono, monospace" font-size="11.33" text-anchor="end" fill="#d03020" xml:space="preserve">(353°)</text>
<text x="325.60" y="130.78" font-family="Liberation Mono, monospace" font-size="11.33" text-anchor="start" fill="#0a62d8" xml:space="preserve">K05GL-D</text>
<text x="414.00" y="130.78" font-family="Liberation Mono, monospace" font-size="11.33" text-anchor="end" fill="#0a62d8" xml:space="preserve">5</text>
<text x="549.00" y="130.78" font-family="Liberation Mono, monospace" font-size="11.33" text-anchor="end" fill="#0a62d8" xml:space="preserve">-21.5</text>
<text x="609.00" y="130.78" font-family="Liberation Mono, monospace" font-size="11.33" text-anchor="end" fill="#0a62d8" xml:space="preserve">-112.4</text>
<text x="656.00" y="130.78" font-family="Liberation Mono, monospace" font-size="11.33" text-anchor="end" fill="#0a62d8" xml:space="preserve">2Edge</text>
<text x="704.00" y="130.78" font-family="Liberation Mono, monospace" font-size="11.33" text-anchor="end" fill="#0a62d8" xml:space="preserve">55.0</text>
<text x="743.50" y="130.78" font-family="Liberation Mono, monospace" font-size="11.33" text-anchor="end" fill="#ac9020" xml:space="preserve">67°</text>
<text x="790.50" y="130.78" font-family="Liberation Mono, monospace" font-size="11.33" text-anchor="end" fill="#ac9020" xml:space="preserve">(51°)</text>
<rect x="312.9" y="121.59" width="7" height="11" fill="#c80000"/>
<text x="316.4" y="130.78" font-family="Liberation Mono, monospace" font-size="10.5" text-anchor="middle" fill="#fff">C</text>
<text x="325.60" y="141.97" font-family="Liberation Mono, monospace" font-size="11.33" text-anchor="start" fill="#0a62d8" xml:space="preserve">KXLY-TV</text>
<text x="414.00" y="141.97" font-family="Liberation Mono, monospace" font-size="11.33" text-anchor="end" fill="#0a62d8" xml:space="preserve">42</text>
<text x="495.50" y="141.97" font-family="Liberation Mono, monospace" font-size="11.33" text-anchor="end" fill="#0a62d8" xml:space="preserve">ABC</text>
<text x="549.00" y="141.97" font-family="Liberation Mono, monospace" font-size="11.33" text-anchor="end" fill="#0a62d8" xml:space="preserve">-24.2</text>
<text x="609.00" y="141.97" font-family="Liberation Mono, monospace" font-size="11.33" text-anchor="end" fill="#0a62d8" xml:space="preserve">-115.0</text>
<text x="656.00" y="141.97" font-family="Liberation Mono, monospace" font-size="11.33" text-anchor="end" fill="#0a62d8" xml:space="preserve">1Edge</text>
<text x="704.00" y="141.97" font-family="Liberation Mono, monospace" font-size="11.33" text-anchor="end" fill="#0a62d8" xml:space="preserve">60.7</text>
<text x="743.50" y="141.97" font-family="Liberation Mono, monospace" font-size="11.33" text-anchor="end" fill="#84a020" xml:space="preserve">86°</text>
<text x="790.50" y="141.97" font-family="Liberation Mono, monospace" font-size="11.33" text-anchor="end" fill="#84a020" xml:space="preserve">(71°)</text>
<text x="325.60" y="153.15" font-family="Liberation Mono, monospace" font-size="11.33" text-anchor="start" fill="#0a62d8" xml:space="preserve">K16EN</text>
<text x="414.00" y="153.15" font-family="Liberation Mono, monospace" font-size="11.33" text-anchor="end" fill="#0a62d8" xml:space="preserve">30</text>
<text x="460.60" y="153.15" font-family="Liberation Mono, monospace" font-size="11.33" text-anchor="end" fill="#0a62d8" xml:space="preserve">(16.1)</text>
<text x="549.00" y="153.15" font-family="Liberation Mono, monospace" font-size="11.33" text-anchor="end" fill="#0a62d8" xml:space="preserve">-25.0</text>
<text x="609.00" y="153.15" font-family="Liberation Mono, monospace" font-size="11.33" text-anchor="end" fill="#0a62d8" xml:space="preserve">-115.9</text>
<text x="656.00" y="153.15" font-family="Liberation Mono, monospace" font-size="11.33" text-anchor="end" fill="#0a62d8" xml:space="preserve">1Edge</text>
<text x="704.00" y="153.15" font-family="Liberation Mono, monospace" font-size="11.33" text-anchor="end" fill="#0a62d8" xml:space="preserve">60.7</text>
<text x="743.50" y="153.15" font-family="Liberation Mono, monospace" font-size="11.33" text-anchor="end" fill="#84a020" xml:space="preserve">86°</text>
<text x="790.50" y="153.15" font-family="Liberation Mono, monospace" font-size="11.33" text-anchor="end" fill="#84a020" xml:space="preserve">(71°)</text>
<text x="325.60" y="164.34" font-family="Liberation Mono, monospace" font-size="11.33" text-anchor="start" fill="#0a62d8" xml:space="preserve">KXLY-TV</text>
<text x="414.00" y="164.34" font-family="Liberation Mono, monospace" font-size="11.33" text-anchor="end" fill="#0a62d8" xml:space="preserve">21</text>
<text x="495.50" y="164.34" font-family="Liberation Mono, monospace" font-size="11.33" text-anchor="end" fill="#0a62d8" xml:space="preserve">ABC</text>
<text x="549.00" y="164.34" font-family="Liberation Mono, monospace" font-size="11.33" text-anchor="end" fill="#0a62d8" xml:space="preserve">-25.2</text>
<text x="609.00" y="164.34" font-family="Liberation Mono, monospace" font-size="11.33" text-anchor="end" fill="#0a62d8" xml:space="preserve">-116.1</text>
<text x="656.00" y="164.34" font-family="Liberation Mono, monospace" font-size="11.33" text-anchor="end" fill="#0a62d8" xml:space="preserve">2Edge</text>
<text x="704.00" y="164.34" font-family="Liberation Mono, monospace" font-size="11.33" text-anchor="end" fill="#0a62d8" xml:space="preserve">20.6</text>
<text x="743.50" y="164.34" font-family="Liberation Mono, monospace" font-size="11.33" text-anchor="end" fill="#d02828" xml:space="preserve">12°</text>
<text x="790.50" y="164.34" font-family="Liberation Mono, monospace" font-size="11.33" text-anchor="end" fill="#d02828" xml:space="preserve">(356°)</text>
<rect x="312.9" y="155.15" width="7" height="11" fill="#c80000"/>
<text x="316.4" y="164.34" font-family="Liberation Mono, monospace" font-size="10.5" text-anchor="middle" fill="#fff">C</text>
<text x="325.60" y="175.52" font-family="Liberation Mono, monospace" font-size="11.33" text-anchor="start" fill="#7000dc" xml:space="preserve">K16EN</text>
<text x="414.00" y="175.52" font-family="Liberation Mono, monospace" font-size="11.33" text-anchor="end" fill="#7000dc" xml:space="preserve">16</text>
<text x="549.00" y="175.52" font-family="Liberation Mono, monospace" font-size="11.33" text-anchor="end" fill="#7000dc" xml:space="preserve">-25.4</text>
<text x="609.00" y="175.52" font-family="Liberation Mono, monospace" font-size="11.33" text-anchor="end" fill="#7000dc" xml:space="preserve">-104.2</text>
<text x="656.00" y="175.52" font-family="Liberation Mono, monospace" font-size="11.33" text-anchor="end" fill="#7000dc" xml:space="preserve">1Edge</text>
<text x="704.00" y="175.52" font-family="Liberation Mono, monospace" font-size="11.33" text-anchor="end" fill="#7000dc" xml:space="preserve">60.7</text>
<text x="743.50" y="175.52" font-family="Liberation Mono, monospace" font-size="11.33" text-anchor="end" fill="#84a020" xml:space="preserve">86°</text>
<text x="790.50" y="175.52" font-family="Liberation Mono, monospace" font-size="11.33" text-anchor="end" fill="#84a020" xml:space="preserve">(71°)</text>
<text x="325.60" y="186.70" font-family="Liberation Mono, monospace" font-size="11.33" text-anchor="start" fill="#0a62d8" xml:space="preserve">KXMN-LD</text>
<text x="414.00" y="186.70" font-family="Liberation Mono, monospace" font-size="11.33" text-anchor="end" fill="#0a62d8" xml:space="preserve">9</text>
<text x="549.00" y="186.70" font-family="Liberation Mono, monospace" font-size="11.33" text-anchor="end" fill="#0a62d8" xml:space="preserve">-25.8</text>
<text x="609.00" y="186.70" font-family="Liberation Mono, monospace" font-size="11.33" text-anchor="end" fill="#0a62d8" xml:space="preserve">-116.6</text>
<text x="656.00" y="186.70" font-family="Liberation Mono, monospace" font-size="11.33" text-anchor="end" fill="#0a62d8" xml:space="preserve">1Edge</text>
<text x="704.00" y="186.70" font-family="Liberation Mono, monospace" font-size="11.33" text-anchor="end" fill="#0a62d8" xml:space="preserve">58.9</text>
<text x="743.50" y="186.70" font-family="Liberation Mono, monospace" font-size="11.33" text-anchor="end" fill="#108850" xml:space="preserve">146°</text>
<text x="790.50" y="186.70" font-family="Liberation Mono, monospace" font-size="11.33" text-anchor="end" fill="#108850" xml:space="preserve">(130°)</text>
<rect x="312.9" y="177.52" width="7" height="11" fill="#c80000"/>
<text x="316.4" y="186.70" font-family="Liberation Mono, monospace" font-size="10.5" text-anchor="middle" fill="#fff">C</text>
<rect x="306.2" y="177.52" width="6.7" height="11" fill="#ff8080"/>
<text x="309.55" y="186.70" font-family="Liberation Mono, monospace" font-size="10.5" text-anchor="middle" fill="#fff">a</text>
<text x="325.60" y="197.89" font-family="Liberation Mono, monospace" font-size="11.33" text-anchor="start" fill="#0a62d8" xml:space="preserve">K24DW</text>
<text x="414.00" y="197.89" font-family="Liberation Mono, monospace" font-size="11.33" text-anchor="end" fill="#0a62d8" xml:space="preserve">49</text>
<text x="460.60" y="197.89" font-family="Liberation Mono, monospace" font-size="11.33" text-anchor="end" fill="#0a62d8" xml:space="preserve">(24.1)</text>
<text x="549.00" y="197.89" font-family="Liberation Mono, monospace" font-size="11.33" text-anchor="end" fill="#0a62d8" xml:space="preserve">-26.5</text>
<text x="609.00" y="197.89" font-family="Liberation Mono, monospace" font-size="11.33" text-anchor="end" fill="#0a62d8" xml:space="preserve">-117.4</text>
<text x="656.00" y="197.89" font-family="Liberation Mono, monospace" font-size="11.33" text-anchor="end" fill="#0a62d8" xml:space="preserve">1Edge</text>
<text x="704.00" y="197.89" font-family="Liberation Mono, monospace" font-size="11.33" text-anchor="end" fill="#0a62d8" xml:space="preserve">60.7</text>
<text x="743.50" y="197.89" font-family="Liberation Mono, monospace" font-size="11.33" text-anchor="end" fill="#84a020" xml:space="preserve">86°</text>
<text x="790.50" y="197.89" font-family="Liberation Mono, monospace" font-size="11.33" text-anchor="end" fill="#84a020" xml:space="preserve">(71°)</text>
<text x="325.60" y="209.07" font-family="Liberation Mono, monospace" font-size="11.33" text-anchor="start" fill="#0a62d8" xml:space="preserve">K11HM-D</text>
<text x="414.00" y="209.07" font-family="Liberation Mono, monospace" font-size="11.33" text-anchor="end" fill="#0a62d8" xml:space="preserve">11</text>
<text x="549.00" y="209.07" font-family="Liberation Mono, monospace" font-size="11.33" text-anchor="end" fill="#0a62d8" xml:space="preserve">-28.9</text>
<text x="609.00" y="209.07" font-family="Liberation Mono, monospace" font-size="11.33" text-anchor="end" fill="#0a62d8" xml:space="preserve">-119.7</text>
<text x="656.00" y="209.07" font-family="Liberation Mono, monospace" font-size="11.33" text-anchor="end" fill="#0a62d8" xml:space="preserve">2Edge</text>
<text x="704.00" y="209.07" font-family="Liberation Mono, monospace" font-size="11.33" text-anchor="end" fill="#0a62d8" xml:space="preserve">83.6</text>
<text x="743.50" y="209.07" font-family="Liberation Mono, monospace" font-size="11.33" text-anchor="end" fill="#a49420" xml:space="preserve">74°</text>
<text x="790.50" y="209.07" font-family="Liberation Mono, monospace" font-size="11.33" text-anchor="end" fill="#a49420" xml:space="preserve">(58°)</text>
<rect x="312.9" y="199.89" width="7" height="11" fill="#c80000"/>
<text x="316.4" y="209.07" font-family="Liberation Mono, monospace" font-size="10.5" text-anchor="middle" fill="#fff">C</text>
<text x="325.60" y="220.26" font-family="Liberation Mono, monospace" font-size="11.33" text-anchor="start" fill="#0a62d8" xml:space="preserve">KXLY-TV</text>
<text x="414.00" y="220.26" font-family="Liberation Mono, monospace" font-size="11.33" text-anchor="end" fill="#0a62d8" xml:space="preserve">22</text>
<text x="495.50" y="220.26" font-family="Liberation Mono, monospace" font-size="11.33" text-anchor="end" fill="#0a62d8" xml:space="preserve">ABC</text>
<text x="549.00" y="220.26" font-family="Liberation Mono, monospace" font-size="11.33" text-anchor="end" fill="#0a62d8" xml:space="preserve">-29.7</text>
<text x="609.00" y="220.26" font-family="Liberation Mono, monospace" font-size="11.33" text-anchor="end" fill="#0a62d8" xml:space="preserve">-120.5</text>
<text x="656.00" y="220.26" font-family="Liberation Mono, monospace" font-size="11.33" text-anchor="end" fill="#0a62d8" xml:space="preserve">2Edge</text>
<text x="704.00" y="220.26" font-family="Liberation Mono, monospace" font-size="11.33" text-anchor="end" fill="#0a62d8" xml:space="preserve">64.9</text>
<text x="743.50" y="220.26" font-family="Liberation Mono, monospace" font-size="11.33" text-anchor="end" fill="#209034" xml:space="preserve">131°</text>
<text x="790.50" y="220.26" font-family="Liberation Mono, monospace" font-size="11.33" text-anchor="end" fill="#209034" xml:space="preserve">(115°)</text>
<text x="325.60" y="231.44" font-family="Liberation Mono, monospace" font-size="11.33" text-anchor="start" fill="#7000dc" xml:space="preserve">CKKM-TV</text>
<text x="414.00" y="231.44" font-family="Liberation Mono, monospace" font-size="11.33" text-anchor="end" fill="#7000dc" xml:space="preserve">3</text>
<text x="549.00" y="231.44" font-family="Liberation Mono, monospace" font-size="11.33" text-anchor="end" fill="#7000dc" xml:space="preserve">-30.4</text>
<text x="609.00" y="231.44" font-family="Liberation Mono, monospace" font-size="11.33" text-anchor="end" fill="#7000dc" xml:space="preserve">-109.3</text>
<text x="656.00" y="231.44" font-family="Liberation Mono, monospace" font-size="11.33" text-anchor="end" fill="#7000dc" xml:space="preserve">2Edge</text>
<text x="704.00" y="231.44" font-family="Liberation Mono, monospace" font-size="11.33" text-anchor="end" fill="#7000dc" xml:space="preserve">96.2</text>
<text x="743.50" y="231.44" font-family="Liberation Mono, monospace" font-size="11.33" text-anchor="end" fill="#c420b0" xml:space="preserve">308°</text>
<text x="790.50" y="231.44" font-family="Liberation Mono, monospace" font-size="11.33" text-anchor="end" fill="#c420b0" xml:space="preserve">(293°)</text>
<rect x="312.9" y="222.26" width="7" height="11" fill="#c80000"/>
<text x="316.4" y="231.44" font-family="Liberation Mono, monospace" font-size="10.5" text-anchor="middle" fill="#fff">C</text>
<text x="325.60" y="242.63" font-family="Liberation Mono, monospace" font-size="11.33" text-anchor="start" fill="#7000dc" xml:space="preserve">CBUAT</text>
<text x="414.00" y="242.63" font-family="Liberation Mono, monospace" font-size="11.33" text-anchor="end" fill="#7000dc" xml:space="preserve">11</text>
<text x="549.00" y="242.63" font-family="Liberation Mono, monospace" font-size="11.33" text-anchor="end" fill="#7000dc" xml:space="preserve">-31.3</text>
<text x="609.00" y="242.63" font-family="Liberation Mono, monospace" font-size="11.33" text-anchor="end" fill="#7000dc" xml:space="preserve">-110.1</text>
<text x="656.00" y="242.63" font-family="Liberation Mono, monospace" font-size="11.33" text-anchor="end" fill="#7000dc" xml:space="preserve">2Edge</text>
<text x="704.00" y="242.63" font-family="Liberation Mono, monospace" font-size="11.33" text-anchor="end" fill="#7000dc" xml:space="preserve">56.7</text>
<text x="743.50" y="242.63" font-family="Liberation Mono, monospace" font-size="11.33" text-anchor="end" fill="#d03020" xml:space="preserve">10°</text>
<text x="790.50" y="242.63" font-family="Liberation Mono, monospace" font-size="11.33" text-anchor="end" fill="#d03020" xml:space="preserve">(354°)</text>
<rect x="312.9" y="233.44" width="7" height="11" fill="#c80000"/>
<text x="316.4" y="242.63" font-family="Liberation Mono, monospace" font-size="10.5" text-anchor="middle" fill="#fff">C</text>
<text x="325.60" y="253.81" font-family="Liberation Mono, monospace" font-size="11.33" text-anchor="start" fill="#7000dc" xml:space="preserve">KXMN-LP</text>
<text x="414.00" y="253.81" font-family="Liberation Mono, monospace" font-size="11.33" text-anchor="end" fill="#7000dc" xml:space="preserve">11</text>
<text x="549.00" y="253.81" font-family="Liberation Mono, monospace" font-size="11.33" text-anchor="end" fill="#7000dc" xml:space="preserve">-32.3</text>
<text x="609.00" y="253.81" font-family="Liberation Mono, monospace" font-size="11.33" text-anchor="end" fill="#7000dc" xml:space="preserve">-111.2</text>
<text x="656.00" y="253.81" font-family="Liberation Mono, monospace" font-size="11.33" text-anchor="end" fill="#7000dc" xml:space="preserve">1Edge</text>
<text x="704.00" y="253.81" font-family="Liberation Mono, monospace" font-size="11.33" text-anchor="end" fill="#7000dc" xml:space="preserve">58.9</text>
<text x="743.50" y="253.81" font-family="Liberation Mono, monospace" font-size="11.33" text-anchor="end" fill="#108850" xml:space="preserve">146°</text>
<text x="790.50" y="253.81" font-family="Liberation Mono, monospace" font-size="11.33" text-anchor="end" fill="#108850" xml:space="preserve">(130°)</text>
<rect x="312.9" y="244.63" width="7" height="11" fill="#c80000"/>
<text x="316.4" y="253.81" font-family="Liberation Mono, monospace" font-size="10.5" text-anchor="middle" fill="#fff">C</text>
<text x="325.60" y="265.00" font-family="Liberation Mono, monospace" font-size="11.33" text-anchor="start" fill="#0a62d8" xml:space="preserve">KXMN-LP</text>
<text x="414.00" y="265.00" font-family="Liberation Mono, monospace" font-size="11.33" text-anchor="end" fill="#0a62d8" xml:space="preserve">9</text>
<text x="460.60" y="265.00" font-family="Liberation Mono, monospace" font-size="11.33" text-anchor="end" fill="#0a62d8" xml:space="preserve">(11.1)</text>
<text x="549.00" y="265.00" font-family="Liberation Mono, monospace" font-size="11.33" text-anchor="end" fill="#0a62d8" xml:space="preserve">-32.6</text>
<text x="609.00" y="265.00" font-family="Liberation Mono, monospace" font-size="11.33" text-anchor="end" fill="#0a62d8" xml:space="preserve">-123.4</text>
<text x="656.00" y="265.00" font-family="Liberation Mono, monospace" font-size="11.33" text-anchor="end" fill="#0a62d8" xml:space="preserve">1Edge</text>
<text x="704.00" y="265.00" font-family="Liberation Mono, monospace" font-size="11.33" text-anchor="end" fill="#0a62d8" xml:space="preserve">58.9</text>
<text x="743.50" y="265.00" font-family="Liberation Mono, monospace" font-size="11.33" text-anchor="end" fill="#108850" xml:space="preserve">146°</text>
<text x="790.50" y="265.00" font-family="Liberation Mono, monospace" font-size="11.33" text-anchor="end" fill="#108850" xml:space="preserve">(130°)</text>
<rect x="312.9" y="255.81" width="7" height="11" fill="#c80000"/>
<text x="316.4" y="265.00" font-family="Liberation Mono, monospace" font-size="10.5" text-anchor="middle" fill="#fff">C</text>
<rect x="306.2" y="255.81" width="6.7" height="11" fill="#ff8080"/>
<text x="309.55" y="265.00" font-family="Liberation Mono, monospace" font-size="10.5" text-anchor="middle" fill="#fff">a</text>
<text x="325.60" y="276.19" font-family="Liberation Mono, monospace" font-size="11.33" text-anchor="start" fill="#0a62d8" xml:space="preserve">KGPX-TV</text>
<text x="414.00" y="276.19" font-family="Liberation Mono, monospace" font-size="11.33" text-anchor="end" fill="#0a62d8" xml:space="preserve">34</text>
<text x="460.60" y="276.19" font-family="Liberation Mono, monospace" font-size="11.33" text-anchor="end" fill="#0a62d8" xml:space="preserve">(34.1)</text>
<text x="495.50" y="276.19" font-family="Liberation Mono, monospace" font-size="11.33" text-anchor="end" fill="#0a62d8" xml:space="preserve">ION</text>
<text x="549.00" y="276.19" font-family="Liberation Mono, monospace" font-size="11.33" text-anchor="end" fill="#0a62d8" xml:space="preserve">-33.4</text>
<text x="609.00" y="276.19" font-family="Liberation Mono, monospace" font-size="11.33" text-anchor="end" fill="#0a62d8" xml:space="preserve">-124.3</text>
<text x="656.00" y="276.19" font-family="Liberation Mono, monospace" font-size="11.33" text-anchor="end" fill="#0a62d8" xml:space="preserve">2Edge</text>
<text x="704.00" y="276.19" font-family="Liberation Mono, monospace" font-size="11.33" text-anchor="end" fill="#0a62d8" xml:space="preserve">57.5</text>
<text x="743.50" y="276.19" font-family="Liberation Mono, monospace" font-size="11.33" text-anchor="end" fill="#108a50" xml:space="preserve">145°</text>
<text x="790.50" y="276.19" font-family="Liberation Mono, monospace" font-size="11.33" text-anchor="end" fill="#108a50" xml:space="preserve">(129°)</text>
<text x="325.60" y="287.37" font-family="Liberation Mono, monospace" font-size="11.33" text-anchor="start" fill="#0a62d8" xml:space="preserve">KWSU-TV</text>
<text x="414.00" y="287.37" font-family="Liberation Mono, monospace" font-size="11.33" text-anchor="end" fill="#0a62d8" xml:space="preserve">10</text>
<text x="495.50" y="287.37" font-family="Liberation Mono, monospace" font-size="11.33" text-anchor="end" fill="#0a62d8" xml:space="preserve">PBS</text>
<text x="549.00" y="287.37" font-family="Liberation Mono, monospace" font-size="11.33" text-anchor="end" fill="#0a62d8" xml:space="preserve">-33.9</text>
<text x="609.00" y="287.37" font-family="Liberation Mono, monospace" font-size="11.33" text-anchor="end" fill="#0a62d8" xml:space="preserve">-124.7</text>
<text x="656.00" y="287.37" font-family="Liberation Mono, monospace" font-size="11.33" text-anchor="end" fill="#0a62d8" xml:space="preserve">2Edge</text>
<text x="704.00" y="287.37" font-family="Liberation Mono, monospace" font-size="11.33" text-anchor="end" fill="#0a62d8" xml:space="preserve">105.6</text>
<text x="743.50" y="287.37" font-family="Liberation Mono, monospace" font-size="11.33" text-anchor="end" fill="#108470" xml:space="preserve">158°</text>
<text x="790.50" y="287.37" font-family="Liberation Mono, monospace" font-size="11.33" text-anchor="end" fill="#108470" xml:space="preserve">(142°)</text>
<rect x="312.9" y="278.19" width="7" height="11" fill="#c80000"/>
<text x="316.4" y="287.37" font-family="Liberation Mono, monospace" font-size="10.5" text-anchor="middle" fill="#fff">C</text>
<rect x="306.2" y="278.19" width="6.7" height="11" fill="#ff8080"/>
<text x="309.55" y="287.37" font-family="Liberation Mono, monospace" font-size="10.5" text-anchor="middle" fill="#fff">a</text>
<text x="325.60" y="298.56" font-family="Liberation Mono, monospace" font-size="11.33" text-anchor="start" fill="#0a62d8" xml:space="preserve">K48DX-D</text>
<text x="414.00" y="298.56" font-family="Liberation Mono, monospace" font-size="11.33" text-anchor="end" fill="#0a62d8" xml:space="preserve">48</text>
<text x="549.00" y="298.56" font-family="Liberation Mono, monospace" font-size="11.33" text-anchor="end" fill="#0a62d8" xml:space="preserve">-35.8</text>
<text x="609.00" y="298.56" font-family="Liberation Mono, monospace" font-size="11.33" text-anchor="end" fill="#0a62d8" xml:space="preserve">-126.7</text>
<text x="656.00" y="298.56" font-family="Liberation Mono, monospace" font-size="11.33" text-anchor="end" fill="#0a62d8" xml:space="preserve">1Edge</text>
<text x="704.00" y="298.56" font-family="Liberation Mono, monospace" font-size="11.33" text-anchor="end" fill="#0a62d8" xml:space="preserve">60.7</text>
<text x="743.50" y="298.56" font-family="Liberation Mono, monospace" font-size="11.33" text-anchor="end" fill="#84a020" xml:space="preserve">86°</text>
<text x="790.50" y="298.56" font-family="Liberation Mono, monospace" font-size="11.33" text-anchor="end" fill="#84a020" xml:space="preserve">(71°)</text>
<text x="325.60" y="309.74" font-family="Liberation Mono, monospace" font-size="11.33" text-anchor="start" fill="#7000dc" xml:space="preserve">CHBC-TV</text>
<text x="414.00" y="309.74" font-family="Liberation Mono, monospace" font-size="11.33" text-anchor="end" fill="#7000dc" xml:space="preserve">2</text>
<text x="549.00" y="309.74" font-family="Liberation Mono, monospace" font-size="11.33" text-anchor="end" fill="#7000dc" xml:space="preserve">-36.4</text>
<text x="609.00" y="309.74" font-family="Liberation Mono, monospace" font-size="11.33" text-anchor="end" fill="#7000dc" xml:space="preserve">-115.2</text>
<text x="656.00" y="309.74" font-family="Liberation Mono, monospace" font-size="11.33" text-anchor="end" fill="#7000dc" xml:space="preserve">2Edge</text>
<text x="704.00" y="309.74" font-family="Liberation Mono, monospace" font-size="11.33" text-anchor="end" fill="#7000dc" xml:space="preserve">135.2</text>
<text x="743.50" y="309.74" font-family="Liberation Mono, monospace" font-size="11.33" text-anchor="end" fill="#d42080" xml:space="preserve">330°</text>
<text x="790.50" y="309.74" font-family="Liberation Mono, monospace" font-size="11.33" text-anchor="end" fill="#d42080" xml:space="preserve">(314°)</text>
<text x="325.60" y="320.93" font-family="Liberation Mono, monospace" font-size="11.33" text-anchor="start" fill="#0a62d8" xml:space="preserve">K18HQ</text>
<text x="414.00" y="320.93" font-family="Liberation Mono, monospace" font-size="11.33" text-anchor="end" fill="#0a62d8" xml:space="preserve">18</text>
<text x="460.60" y="320.93" font-family="Liberation Mono, monospace" font-size="11.33" text-anchor="end" fill="#0a62d8" xml:space="preserve">(18.1)</text>
<text x="549.00" y="320.93" font-family="Liberation Mono, monospace" font-size="11.33" text-anchor="end" fill="#0a62d8" xml:space="preserve">-36.6</text>
<text x="609.00" y="320.93" font-family="Liberation Mono, monospace" font-size="11.33" text-anchor="end" fill="#0a62d8" xml:space="preserve">-127.4</text>
<text x="656.00" y="320.93" font-family="Liberation Mono, monospace" font-size="11.33" text-anchor="end" fill="#0a62d8" xml:space="preserve">1Edge</text>
<text x="704.00" y="320.93" font-family="Liberation Mono, monospace" font-size="11.33" text-anchor="end" fill="#0a62d8" xml:space="preserve">60.8</text>
<text x="743.50" y="320.93" font-family="Liberation Mono, monospace" font-size="11.33" text-anchor="end" fill="#84a020" xml:space="preserve">86°</text>
<text x="790.50" y="320.93" font-family="Liberation Mono, monospace" font-size="11.33" text-anchor="end" fill="#84a020" xml:space="preserve">(71°)</text>
<rect x="312.9" y="311.74" width="7" height="11" fill="#c80000"/>
<text x="316.4" y="320.93" font-family="Liberation Mono, monospace" font-size="10.5" text-anchor="middle" fill="#fff">C</text>
<text x="325.60" y="332.11" font-family="Liberation Mono, monospace" font-size="11.33" text-anchor="start" fill="#0a62d8" xml:space="preserve">KQUP</text>
<text x="414.00" y="332.11" font-family="Liberation Mono, monospace" font-size="11.33" text-anchor="end" fill="#0a62d8" xml:space="preserve">24</text>
<text x="460.60" y="332.11" font-family="Liberation Mono, monospace" font-size="11.33" text-anchor="end" fill="#0a62d8" xml:space="preserve">(24.1)</text>
<text x="495.50" y="332.11" font-family="Liberation Mono, monospace" font-size="11.33" text-anchor="end" fill="#0a62d8" xml:space="preserve">Ind</text>
<text x="549.00" y="332.11" font-family="Liberation Mono, monospace" font-size="11.33" text-anchor="end" fill="#0a62d8" xml:space="preserve">-37.0</text>
<text x="609.00" y="332.11" font-family="Liberation Mono, monospace" font-size="11.33" text-anchor="end" fill="#0a62d8" xml:space="preserve">-127.8</text>
<text x="656.00" y="332.11" font-family="Liberation Mono, monospace" font-size="11.33" text-anchor="end" fill="#0a62d8" xml:space="preserve">1Edge</text>
<text x="704.00" y="332.11" font-family="Liberation Mono, monospace" font-size="11.33" text-anchor="end" fill="#0a62d8" xml:space="preserve">82.7</text>
<text x="743.50" y="332.11" font-family="Liberation Mono, monospace" font-size="11.33" text-anchor="end" fill="#108a58" xml:space="preserve">149°</text>
<text x="790.50" y="332.11" font-family="Liberation Mono, monospace" font-size="11.33" text-anchor="end" fill="#108a58" xml:space="preserve">(133°)</text>
<rect x="312.9" y="322.93" width="7" height="11" fill="#c80000"/>
<text x="316.4" y="332.11" font-family="Liberation Mono, monospace" font-size="10.5" text-anchor="middle" fill="#fff">C</text>
<text x="325.60" y="343.30" font-family="Liberation Mono, monospace" font-size="11.33" text-anchor="start" fill="#0a62d8" xml:space="preserve">K10AP</text>
<text x="414.00" y="343.30" font-family="Liberation Mono, monospace" font-size="11.33" text-anchor="end" fill="#0a62d8" xml:space="preserve">10</text>
<text x="460.60" y="343.30" font-family="Liberation Mono, monospace" font-size="11.33" text-anchor="end" fill="#0a62d8" xml:space="preserve">(10.1)</text>
<text x="549.00" y="343.30" font-family="Liberation Mono, monospace" font-size="11.33" text-anchor="end" fill="#0a62d8" xml:space="preserve">-38.2</text>
<text x="609.00" y="343.30" font-family="Liberation Mono, monospace" font-size="11.33" text-anchor="end" fill="#0a62d8" xml:space="preserve">-129.0</text>
<text x="656.00" y="343.30" font-family="Liberation Mono, monospace" font-size="11.33" text-anchor="end" fill="#0a62d8" xml:space="preserve">2Edge</text>
<text x="704.00" y="343.30" font-family="Liberation Mono, monospace" font-size="11.33" text-anchor="end" fill="#0a62d8" xml:space="preserve">93.0</text>
<text x="743.50" y="343.30" font-family="Liberation Mono, monospace" font-size="11.33" text-anchor="end" fill="#4a18b4" xml:space="preserve">259°</text>
<text x="790.50" y="343.30" font-family="Liberation Mono, monospace" font-size="11.33" text-anchor="end" fill="#4a18b4" xml:space="preserve">(244°)</text>
<rect x="312.9" y="334.11" width="7" height="11" fill="#c80000"/>
<text x="316.4" y="343.30" font-family="Liberation Mono, monospace" font-size="10.5" text-anchor="middle" fill="#fff">C</text>
<rect x="306.2" y="334.11" width="6.7" height="11" fill="#ff8080"/>
<text x="309.55" y="343.30" font-family="Liberation Mono, monospace" font-size="10.5" text-anchor="middle" fill="#fff">a</text>
<text x="325.60" y="354.48" font-family="Liberation Mono, monospace" font-size="11.33" text-anchor="start" fill="#0a62d8" xml:space="preserve">K09XY-D</text>
<text x="414.00" y="354.48" font-family="Liberation Mono, monospace" font-size="11.33" text-anchor="end" fill="#0a62d8" xml:space="preserve">9</text>
<text x="549.00" y="354.48" font-family="Liberation Mono, monospace" font-size="11.33" text-anchor="end" fill="#0a62d8" xml:space="preserve">-38.2</text>
<text x="609.00" y="354.48" font-family="Liberation Mono, monospace" font-size="11.33" text-anchor="end" fill="#0a62d8" xml:space="preserve">-129.0</text>
<text x="656.00" y="354.48" font-family="Liberation Mono, monospace" font-size="11.33" text-anchor="end" fill="#0a62d8" xml:space="preserve">2Edge</text>
<text x="704.00" y="354.48" font-family="Liberation Mono, monospace" font-size="11.33" text-anchor="end" fill="#0a62d8" xml:space="preserve">55.0</text>
<text x="743.50" y="354.48" font-family="Liberation Mono, monospace" font-size="11.33" text-anchor="end" fill="#ac9020" xml:space="preserve">67°</text>
<text x="790.50" y="354.48" font-family="Liberation Mono, monospace" font-size="11.33" text-anchor="end" fill="#ac9020" xml:space="preserve">(51°)</text>
<rect x="312.9" y="345.30" width="7" height="11" fill="#c80000"/>
<text x="316.4" y="354.48" font-family="Liberation Mono, monospace" font-size="10.5" text-anchor="middle" fill="#fff">C</text>
<rect x="306.2" y="345.30" width="6.7" height="11" fill="#ff8080"/>
<text x="309.55" y="354.48" font-family="Liberation Mono, monospace" font-size="10.5" text-anchor="middle" fill="#fff">a</text>
<text x="325.60" y="365.67" font-family="Liberation Mono, monospace" font-size="11.33" text-anchor="start" fill="#0a62d8" xml:space="preserve">K10KR-D</text>
<text x="414.00" y="365.67" font-family="Liberation Mono, monospace" font-size="11.33" text-anchor="end" fill="#0a62d8" xml:space="preserve">10</text>
<text x="549.00" y="365.67" font-family="Liberation Mono, monospace" font-size="11.33" text-anchor="end" fill="#0a62d8" xml:space="preserve">-39.1</text>
<text x="609.00" y="365.67" font-family="Liberation Mono, monospace" font-size="11.33" text-anchor="end" fill="#0a62d8" xml:space="preserve">-130.0</text>
<text x="656.00" y="365.67" font-family="Liberation Mono, monospace" font-size="11.33" text-anchor="end" fill="#0a62d8" xml:space="preserve">2Edge</text>
<text x="704.00" y="365.67" font-family="Liberation Mono, monospace" font-size="11.33" text-anchor="end" fill="#0a62d8" xml:space="preserve">55.0</text>
<text x="743.50" y="365.67" font-family="Liberation Mono, monospace" font-size="11.33" text-anchor="end" fill="#ac9020" xml:space="preserve">67°</text>
<text x="790.50" y="365.67" font-family="Liberation Mono, monospace" font-size="11.33" text-anchor="end" fill="#ac9020" xml:space="preserve">(51°)</text>
<rect x="312.9" y="356.48" width="7" height="11" fill="#c80000"/>
<text x="316.4" y="365.67" font-family="Liberation Mono, monospace" font-size="10.5" text-anchor="middle" fill="#fff">C</text>
<rect x="306.2" y="356.48" width="6.7" height="11" fill="#ff8080"/>
<text x="309.55" y="365.67" font-family="Liberation Mono, monospace" font-size="10.5" text-anchor="middle" fill="#fff">a</text>
<text x="325.60" y="376.85" font-family="Liberation Mono, monospace" font-size="11.33" text-anchor="start" fill="#0a62d8" xml:space="preserve">K12AV</text>
<text x="414.00" y="376.85" font-family="Liberation Mono, monospace" font-size="11.33" text-anchor="end" fill="#0a62d8" xml:space="preserve">12</text>
<text x="460.60" y="376.85" font-family="Liberation Mono, monospace" font-size="11.33" text-anchor="end" fill="#0a62d8" xml:space="preserve">(12.1)</text>
<text x="549.00" y="376.85" font-family="Liberation Mono, monospace" font-size="11.33" text-anchor="end" fill="#0a62d8" xml:space="preserve">-39.6</text>
<text x="609.00" y="376.85" font-family="Liberation Mono, monospace" font-size="11.33" text-anchor="end" fill="#0a62d8" xml:space="preserve">-130.4</text>
<text x="656.00" y="376.85" font-family="Liberation Mono, monospace" font-size="11.33" text-anchor="end" fill="#0a62d8" xml:space="preserve">2Edge</text>
<text x="704.00" y="376.85" font-family="Liberation Mono, monospace" font-size="11.33" text-anchor="end" fill="#0a62d8" xml:space="preserve">93.0</text>
<text x="743.50" y="376.85" font-family="Liberation Mono, monospace" font-size="11.33" text-anchor="end" fill="#4a18b4" xml:space="preserve">259°</text>
<text x="790.50" y="376.85" font-family="Liberation Mono, monospace" font-size="11.33" text-anchor="end" fill="#4a18b4" xml:space="preserve">(244°)</text>
<rect x="312.9" y="367.67" width="7" height="11" fill="#c80000"/>
<text x="316.4" y="376.85" font-family="Liberation Mono, monospace" font-size="10.5" text-anchor="middle" fill="#fff">C</text>
<rect x="306.2" y="367.67" width="6.7" height="11" fill="#ff8080"/>
<text x="309.55" y="376.85" font-family="Liberation Mono, monospace" font-size="10.5" text-anchor="middle" fill="#fff">a</text>
<text x="325.60" y="388.04" font-family="Liberation Mono, monospace" font-size="11.33" text-anchor="start" fill="#0a62d8" xml:space="preserve">K11UN-D</text>
<text x="414.00" y="388.04" font-family="Liberation Mono, monospace" font-size="11.33" text-anchor="end" fill="#0a62d8" xml:space="preserve">11</text>
<text x="549.00" y="388.04" font-family="Liberation Mono, monospace" font-size="11.33" text-anchor="end" fill="#0a62d8" xml:space="preserve">-39.8</text>
<text x="609.00" y="388.04" font-family="Liberation Mono, monospace" font-size="11.33" text-anchor="end" fill="#0a62d8" xml:space="preserve">-130.6</text>
<text x="656.00" y="388.04" font-family="Liberation Mono, monospace" font-size="11.33" text-anchor="end" fill="#0a62d8" xml:space="preserve">2Edge</text>
<text x="704.00" y="388.04" font-family="Liberation Mono, monospace" font-size="11.33" text-anchor="end" fill="#0a62d8" xml:space="preserve">55.0</text>
<text x="743.50" y="388.04" font-family="Liberation Mono, monospace" font-size="11.33" text-anchor="end" fill="#ac9020" xml:space="preserve">67°</text>
<text x="790.50" y="388.04" font-family="Liberation Mono, monospace" font-size="11.33" text-anchor="end" fill="#ac9020" xml:space="preserve">(51°)</text>
<rect x="312.9" y="378.85" width="7" height="11" fill="#c80000"/>
<text x="316.4" y="388.04" font-family="Liberation Mono, monospace" font-size="10.5" text-anchor="middle" fill="#fff">C</text>
<text x="325.60" y="399.22" font-family="Liberation Mono, monospace" font-size="11.33" text-anchor="start" fill="#0a62d8" xml:space="preserve">K08BG</text>
<text x="414.00" y="399.22" font-family="Liberation Mono, monospace" font-size="11.33" text-anchor="end" fill="#0a62d8" xml:space="preserve">8</text>
<text x="460.60" y="399.22" font-family="Liberation Mono, monospace" font-size="11.33" text-anchor="end" fill="#0a62d8" xml:space="preserve">(8.1)</text>
<text x="549.00" y="399.22" font-family="Liberation Mono, monospace" font-size="11.33" text-anchor="end" fill="#0a62d8" xml:space="preserve">-39.8</text>
<text x="609.00" y="399.22" font-family="Liberation Mono, monospace" font-size="11.33" text-anchor="end" fill="#0a62d8" xml:space="preserve">-130.7</text>
<text x="656.00" y="399.22" font-family="Liberation Mono, monospace" font-size="11.33" text-anchor="end" fill="#0a62d8" xml:space="preserve">2Edge</text>
<text x="704.00" y="399.22" font-family="Liberation Mono, monospace" font-size="11.33" text-anchor="end" fill="#0a62d8" xml:space="preserve">102.4</text>
<text x="743.50" y="399.22" font-family="Liberation Mono, monospace" font-size="11.33" text-anchor="end" fill="#90a020" xml:space="preserve">81°</text>
<text x="790.50" y="399.22" font-family="Liberation Mono, monospace" font-size="11.33" text-anchor="end" fill="#90a020" xml:space="preserve">(66°)</text>
<rect x="312.9" y="390.04" width="7" height="11" fill="#c80000"/>
<text x="316.4" y="399.22" font-family="Liberation Mono, monospace" font-size="10.5" text-anchor="middle" fill="#fff">C</text>
<rect x="306.2" y="390.04" width="6.7" height="11" fill="#ff8080"/>
<text x="309.55" y="399.22" font-family="Liberation Mono, monospace" font-size="10.5" text-anchor="middle" fill="#fff">a</text>
<rect x="346.5" y="405.3" width="7" height="11" fill="#c80000"/>
<text x="350" y="415" font-family="Liberation Mono, monospace" font-size="10.5" text-anchor="middle" fill="#fff">C</text>
<text transform="translate(360.00,416.00) scale(1.0713,1)" x="0" y="0" font-family="Liberation Sans, sans-serif" font-size="11.5" text-anchor="start" fill="#111" xml:space="preserve">=  Co-channel warning</text>
<rect x="557.5" y="405.3" width="7" height="11" fill="#ff8080"/>
<text x="561" y="415" font-family="Liberation Mono, monospace" font-size="10.5" text-anchor="middle" fill="#fff">a</text>
<text transform="translate(572.00,416.00) scale(1.0799,1)" x="0" y="0" font-family="Liberation Sans, sans-serif" font-size="11.5" text-anchor="start" fill="#111" xml:space="preserve">=  Adjacent channel warning</text>
</svg></body></html>
